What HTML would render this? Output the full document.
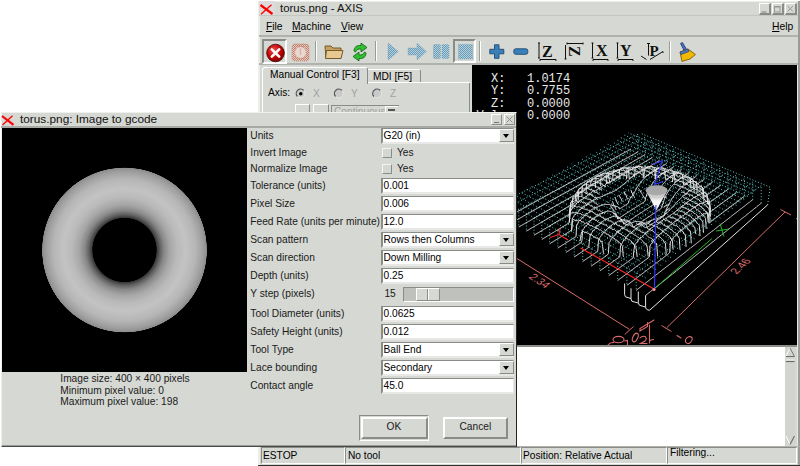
<!DOCTYPE html>
<html><head><meta charset="utf-8">
<style>
*{margin:0;padding:0;box-sizing:border-box}
html,body{width:800px;height:466px;overflow:hidden;background:#fff;position:relative;font-family:"Liberation Sans",sans-serif;color:#000}
.a{position:absolute}
.t{position:absolute;white-space:nowrap;line-height:1;font-size:10.2px}
.bg{background:#d6d8d3}
.sunk{border-top:1px solid #8a8c88;border-left:1px solid #8a8c88;border-bottom:1px solid #fff;border-right:1px solid #fff}
.rais{border-top:1px solid #fff;border-left:1px solid #fff;border-bottom:1px solid #8a8c88;border-right:1px solid #8a8c88}
.entry{position:absolute;left:381px;width:133px;height:16px;background:#fff;border-top:1px solid #8a8c88;border-left:2px solid #8a8c88;border-bottom:2px solid #e8e9e6;border-right:1px solid #e8e9e6}
.entry span{position:absolute;left:1px;top:2px;font-size:10.2px;white-space:nowrap;line-height:1}
.ddb{position:absolute;right:0;top:0;width:15px;height:13px;background:#d6d8d3;border-top:1px solid #fff;border-left:1px solid #fff;border-bottom:1px solid #8a8c88;border-right:1px solid #8a8c88}
.ddb:after{content:"";position:absolute;left:2.5px;top:4px;border-left:3.5px solid transparent;border-right:3.5px solid transparent;border-top:4px solid #000}
.lbl{position:absolute;left:250px;font-size:10.2px;white-space:nowrap;line-height:1;color:#1a1a1a}
.chk{position:absolute;left:382px;width:10px;height:10px;background:#d4d6d1;border-top:1px solid #f4f4f4;border-left:1px solid #f4f4f4;border-bottom:1px solid #8a8c88;border-right:1px solid #8a8c88}
.tb{position:absolute;width:11px;height:11px;background:#d6d8d3;border-top:1px solid #fff;border-left:1px solid #fff;border-bottom:1px solid #8a8c88;border-right:1px solid #8a8c88}
.sep{position:absolute;width:2px;border-left:1px solid #9a9c98;border-right:1px solid #fff}
</style></head><body>

<!-- ================= AXIS WINDOW ================= -->
<div class="a bg" style="left:258px;top:1px;width:542px;height:465px;border-left:2px solid #eceeea;border-top:1px solid #eceeea"></div>
<!-- title bar -->
<div class="a" style="left:259px;top:1px;width:16px;height:14px;background:#dcdcdc"></div>
<svg class="a" style="left:259px;top:4px" width="16" height="11" viewBox="0 0 16 11"><path d="M1.5 1 L13.5 10" stroke="#f00" stroke-width="2.2"/><path d="M12.5 0.8 L2 10.2" stroke="#f00" stroke-width="1.3"/></svg>
<div class="t" style="left:280px;top:3px;font-size:11.4px;color:#111">torus.png - AXIS</div>
<div class="tb" style="left:759px;top:3px;width:12px;height:12px;border-right-width:2px;border-bottom-width:2px"></div>
<div class="tb" style="left:772px;top:3px;width:12px;height:12px;border-right-width:2px;border-bottom-width:2px"></div>
<div class="tb" style="left:785px;top:3px;width:12px;height:12px;border-right-width:2px;border-bottom-width:2px"></div>
<svg class="a" style="left:759px;top:3px" width="40" height="12" viewBox="0 0 40 12">
<path d="M2.5 9 H7.5" stroke="#888" stroke-width="1.1"/>
<rect x="15.5" y="3.5" width="5.5" height="5.5" fill="none" stroke="#999" stroke-width="1"/><path d="M15.5 4 H21" stroke="#999" stroke-width="1"/>
<path d="M28.5 3 L34 8.5 M34 3 L28.5 8.5" stroke="#999" stroke-width="1"/>
</svg>
<!-- menubar -->
<div class="a" style="left:259px;top:15px;width:541px;height:1px;background:#c4c6c2"></div>
<div class="a" style="left:259px;top:35px;width:541px;height:2px;background:#b0b2ae"></div>
<div class="t" style="left:266px;top:22px;font-size:10.3px"><u>F</u>ile</div>
<div class="t" style="left:292px;top:22px;font-size:10.3px"><u>M</u>achine</div>
<div class="t" style="left:341px;top:22px;font-size:10.3px"><u>V</u>iew</div>
<div class="t" style="left:772px;top:22px;font-size:10.3px"><u>H</u>elp</div>
<!-- toolbar -->
<div class="a" style="left:259px;top:63px;width:541px;height:2px;background:#b0b2ae"></div>
<svg width="0" height="0" style="position:absolute"><defs><pattern id="dith" width="2" height="2" patternUnits="userSpaceOnUse"><rect width="2" height="2" fill="#b4d0dc"/><rect width="1" height="1" fill="#6a9cb8"/><rect x="1" y="1" width="1" height="1" fill="#6a9cb8"/></pattern>
<pattern id="dithr" width="2" height="2" patternUnits="userSpaceOnUse"><rect width="2" height="2" fill="#e8d0c4"/><rect width="1" height="1" fill="#c08070"/><rect x="1" y="1" width="1" height="1" fill="#c08070"/></pattern></defs></svg>
<!-- estop sunken button -->
<div class="a" style="left:262px;top:39px;width:25px;height:25px;border-top:2px solid #8a8c88;border-left:2px solid #8a8c88;border-bottom:2px solid #fff;border-right:2px solid #fff;background:#d6d8d3"></div>
<svg class="a" style="left:265px;top:43px" width="21" height="21" viewBox="0 0 21 21">
<defs><radialGradient id="rg1" cx="0.4" cy="0.35" r="0.7"><stop offset="0" stop-color="#f05050"/><stop offset="0.6" stop-color="#c00000"/><stop offset="1" stop-color="#700000"/></radialGradient></defs>
<circle cx="10.5" cy="10" r="8.8" fill="url(#rg1)" stroke="#400" stroke-width="0.8"/>
<path d="M6.8 6.3 L14.2 13.7 M14.2 6.3 L6.8 13.7" stroke="#fff" stroke-width="2.6" stroke-linecap="round"/>
</svg>
<!-- machine power (faded) -->
<svg class="a" style="left:291px;top:43px" width="19" height="19" viewBox="0 0 19 19">
<rect x="1" y="1" width="17" height="17" rx="3" fill="url(#dithr)" stroke="#c89080" stroke-width="1" stroke-dasharray="1 1"/>
<circle cx="9.5" cy="9.5" r="6" fill="#e8d8d0" stroke="#c88878" stroke-width="1.4" stroke-dasharray="1 1"/>
<path d="M9.5 5.5 V12" stroke="#c88878" stroke-width="1.2" stroke-dasharray="1 1"/>
</svg>
<div class="sep" style="left:315px;top:41px;height:20px"></div>
<!-- folder -->
<svg class="a" style="left:324px;top:44px" width="20" height="17" viewBox="0 0 20 17">
<path d="M1 2 L7 2 L9 4 L17 4 L17 14 L2 14 Z" fill="#c8a060" stroke="#6a5020" stroke-width="0.9"/>
<path d="M2.5 6.5 L19 6.5 L17 14.5 L1.5 14.5 Z" fill="#e8c890" stroke="#6a5020" stroke-width="0.9"/>
</svg>
<!-- reload -->
<svg class="a" style="left:350px;top:42px" width="20" height="20" viewBox="0 0 20 20">
<path d="M4 9 C4 5 7 3 11 3.5 L11 1 L17 5.5 L11 10 L11 7 C8.5 6.8 6.5 7.5 5.5 10 Z" fill="#30c030" stroke="#106010" stroke-width="0.8"/>
<path d="M16 11 C16 15 13 17 9 16.5 L9 19 L3 14.5 L9 10 L9 13 C11.5 13.2 13.5 12.5 14.5 10 Z" fill="#30c030" stroke="#106010" stroke-width="0.8"/>
</svg>
<div class="sep" style="left:375px;top:41px;height:20px"></div>
<!-- run (faded triangle) -->
<svg class="a" style="left:387px;top:42px" width="13" height="19" viewBox="0 0 13 19">
<path d="M1 1 L11.5 9.5 L1 18 Z" fill="url(#dith)" stroke="#6a98b0" stroke-width="0.6" stroke-dasharray="1 1"/>
</svg>
<!-- step arrow -->
<svg class="a" style="left:407px;top:42px" width="21" height="19" viewBox="0 0 21 19">
<path d="M1 6 L10 6 L10 1 L19.5 9.5 L10 18 L10 13 L1 13 Z" fill="url(#dith)" stroke="#6a98b0" stroke-width="0.6" stroke-dasharray="1 1"/>
</svg>
<!-- pause -->
<svg class="a" style="left:433px;top:44px" width="17" height="16" viewBox="0 0 17 16">
<rect x="0.5" y="0.5" width="7" height="14" rx="1" fill="url(#dith)" stroke="#6a98b0" stroke-width="0.6" stroke-dasharray="1 1"/>
<rect x="9" y="0.5" width="7" height="14" rx="1" fill="url(#dith)" stroke="#6a98b0" stroke-width="0.6" stroke-dasharray="1 1"/>
</svg>
<!-- stop sunken -->
<div class="a" style="left:453px;top:39px;width:23px;height:24px;border-top:2px solid #8a8c88;border-left:2px solid #8a8c88;border-bottom:2px solid #fff;border-right:2px solid #fff;background:#d6d8d3"></div>
<svg class="a" style="left:458px;top:44px" width="16" height="16" viewBox="0 0 16 16">
<rect x="0.5" y="0.5" width="14" height="14.5" fill="url(#dith)" stroke="#6a98b0" stroke-width="0.6" stroke-dasharray="1 1"/>
</svg>
<div class="sep" style="left:479px;top:41px;height:20px"></div>
<!-- plus -->
<svg class="a" style="left:489px;top:44px" width="16" height="16" viewBox="0 0 16 16">
<path d="M5.5 0.8 H10 V5.3 H14.8 V9.8 H10 V14.3 H5.5 V9.8 H0.8 V5.3 H5.5 Z" fill="#3a80b8" stroke="#204870" stroke-width="0.9" stroke-linejoin="round"/>
</svg>
<!-- minus -->
<svg class="a" style="left:513px;top:48px" width="16" height="8" viewBox="0 0 16 8">
<rect x="0.8" y="0.8" width="14" height="5.5" rx="2" fill="#3a80b8" stroke="#204870" stroke-width="0.9"/>
</svg>
<!-- Z view -->
<svg class="a" style="left:536px;top:41px" width="24" height="21" viewBox="0 0 24 21">
<path d="M3 2 V17 M2 2 H4 M2 17 H4" stroke="#111" stroke-width="1"/>
<path d="M4 18.5 H20" stroke="#111" stroke-width="1"/>
<path d="M4 18.5 L4 20 M20 18.5 L20 20" stroke="#111" stroke-width="1"/>
<text x="6" y="15.5" font-family="Liberation Serif" font-weight="bold" font-size="16" fill="#111">Z</text>
</svg>
<!-- rotated Z -->
<svg class="a" style="left:564px;top:41px" width="22" height="21" viewBox="0 0 22 21">
<path d="M1.5 4 V18 M0.5 18 H2.5" stroke="#111" stroke-width="1"/>
<path d="M3 2.5 H19 M3 1.5 V3.5 M19 1.5 V3.5" stroke="#111" stroke-width="1"/>
<text x="0" y="0" font-family="Liberation Serif" font-weight="bold" font-size="16" fill="#111" transform="translate(5,5) rotate(90)">Z</text>
</svg>
<!-- X view -->
<svg class="a" style="left:590px;top:41px" width="22" height="21" viewBox="0 0 22 21">
<path d="M2.5 2 V17 M1.5 2 H3.5 M1.5 17 H3.5" stroke="#111" stroke-width="1"/>
<path d="M3 18.5 H18 M3 18.5 V20 M18 18.5 V20" stroke="#111" stroke-width="1"/>
<text x="6" y="15" font-family="Liberation Serif" font-weight="bold" font-size="16" fill="#111">X</text>
</svg>
<!-- Y view -->
<svg class="a" style="left:615px;top:41px" width="22" height="21" viewBox="0 0 22 21">
<path d="M2.5 2 V17 M1.5 2 H3.5 M1.5 17 H3.5" stroke="#111" stroke-width="1"/>
<path d="M3 18.5 H18 M3 18.5 V20 M18 18.5 V20" stroke="#111" stroke-width="1"/>
<text x="5" y="15" font-family="Liberation Serif" font-weight="bold" font-size="16" fill="#111">Y</text>
</svg>
<!-- P view -->
<svg class="a" style="left:640px;top:41px" width="26" height="21" viewBox="0 0 26 21">
<path d="M8.5 2 V14.5 M7 2.5 H10" stroke="#111" stroke-width="1"/>
<path d="M1 15 L6.5 18.5 M10 18.5 L23 10.5 M23 10.5 V12" stroke="#111" stroke-width="1"/>
<text x="9.5" y="14.5" font-family="Liberation Serif" font-weight="bold" font-size="15" fill="#111">P</text>
</svg>
<div class="sep" style="left:669px;top:41px;height:20px"></div>
<!-- brush -->
<svg class="a" style="left:678px;top:41px" width="20" height="22" viewBox="0 0 20 22">
<path d="M2.5 2.5 L4.5 1.5 L9.5 10 L7 11.5 Z" fill="#4870c0" stroke="#203870" stroke-width="0.8"/>
<path d="M2 11 L10 8 L17.5 13.5 L12 18 L4 20.5 Z" fill="#f0b800" stroke="#705000" stroke-width="0.8"/>
<path d="M2 11 L10 8 L11 10.5 L3 13.5 Z" fill="#5078c0" stroke="#203870" stroke-width="0.6"/>
</svg>


<!-- left panel (tabs) -->
<!-- active tab -->
<div class="a" style="left:262px;top:67px;width:106px;height:17px;background:#d6d8d3;border-top:1px solid #fff;border-left:1px solid #fff;border-right:1px solid #8a8c88;border-radius:3px 3px 0 0"></div>
<div class="t" style="left:270px;top:70px;font-size:10.2px">Manual Control [F3]</div>
<!-- MDI tab -->
<div class="a" style="left:368px;top:69px;width:53px;height:14px;background:#d6d8d3;border-top:1px solid #fff;border-right:1px solid #8a8c88;border-radius:0 3px 0 0"></div>
<div class="t" style="left:373px;top:72px;font-size:10.2px">MDI [F5]</div>
<!-- panel frame -->
<div class="a" style="left:262px;top:83px;width:208px;height:40px;border-left:1px solid #fff;border-right:1px solid #8a8c88"></div>
<div class="a" style="left:368px;top:82px;width:102px;height:1px;background:#fff"></div>
<div class="t" style="left:268px;top:88px;font-size:10.2px">Axis:</div>
<svg class="a" style="left:294px;top:87px" width="110" height="14" viewBox="0 0 110 14">
<g><circle cx="6.8" cy="6.8" r="4.3" fill="#cacaca"/><path d="M3.5 9.6 A4.3 4.3 0 0 1 9.8 3.5" fill="none" stroke="#555" stroke-width="1.3"/><path d="M9.8 3.5 A4.3 4.3 0 0 1 3.5 9.6" fill="none" stroke="#e8e8e8" stroke-width="1"/><circle cx="6.8" cy="6.8" r="1.7" fill="#000"/></g>
<g transform="translate(38.2,0)"><circle cx="6.8" cy="6.8" r="4.3" fill="#cacaca"/><path d="M3.5 9.6 A4.3 4.3 0 0 1 9.8 3.5" fill="none" stroke="#555" stroke-width="1.3"/><path d="M9.8 3.5 A4.3 4.3 0 0 1 3.5 9.6" fill="none" stroke="#e8e8e8" stroke-width="1"/></g>
<g transform="translate(76.5,0)"><circle cx="6.8" cy="6.8" r="4.3" fill="#cacaca"/><path d="M3.5 9.6 A4.3 4.3 0 0 1 9.8 3.5" fill="none" stroke="#555" stroke-width="1.3"/><path d="M9.8 3.5 A4.3 4.3 0 0 1 3.5 9.6" fill="none" stroke="#e8e8e8" stroke-width="1"/></g>
</svg>
<div class="t" style="left:313px;top:89px;font-size:10.2px;color:#a0a29e">X</div>
<div class="t" style="left:351px;top:89px;font-size:10.2px;color:#a0a29e">Y</div>
<div class="t" style="left:390px;top:89px;font-size:10.2px;color:#a0a29e">Z</div>
<div class="a" style="left:295px;top:104px;width:15px;height:10px;border-top:1px solid #fff;border-left:1px solid #fff;border-right:1px solid #8a8c88"></div>
<div class="a" style="left:313px;top:104px;width:16px;height:10px;border-top:1px solid #fff;border-left:1px solid #fff;border-right:1px solid #8a8c88"></div>
<div class="a" style="left:331px;top:105px;width:68px;height:10px;border-top:1px solid #8a8c88;border-left:1px solid #8a8c88;background:#d6d8d3"></div>
<div class="t" style="left:334px;top:107px;font-size:10.2px;color:#a0a29e">Continuous</div>
<div class="a" style="left:385px;top:106px;width:13px;height:8px;border-top:1px solid #fff;border-left:1px solid #fff;background:#d6d8d3"></div>
<div class="a" style="left:388px;top:109px;width:7px;height:2px;background:#555"></div>


<!-- 3D view -->
<div class="a" style="left:472px;top:65px;width:325px;height:280px;background:#000;overflow:hidden">
<svg class="a" style="left:0;top:0" width="325" height="280" viewBox="0 0 325 280">
<path d="M289.2 138.2 L289.2 120.6 M289.2 120.6 L164.2 207.8 M164.2 207.8 L164.2 225.4 M280.7 134.7 L280.7 117.1 M280.7 117.1 L154.9 202.8 M154.9 202.8 L154.9 220.4 M272.3 131.2 L272.3 113.6 M272.3 113.6 L145.7 197.9 M145.7 197.9 L145.7 215.5 M264.1 127.7 L264.1 110.2 M264.1 110.2 L136.8 193.0 M136.8 193.0 L136.8 210.6 M255.9 124.3 L255.9 106.8 M255.9 106.8 L127.9 188.3 M127.9 188.3 L127.9 205.8 M247.9 121.0 L247.9 103.4 M247.9 103.4 L119.2 183.6 M119.2 183.6 L119.2 201.1 M239.9 117.7 L239.9 100.1 M239.9 100.1 L110.7 178.9 M110.7 178.9 L110.7 196.5 M232.1 114.4 L232.1 96.9 M232.1 96.9 L102.2 174.4 M102.2 174.4 L102.2 191.9 M224.3 111.2 L224.3 93.6 M224.3 93.6 L93.9 169.9 M93.9 169.9 L93.9 187.5 M216.7 108.0 L216.7 90.5 M216.7 90.5 L85.8 165.5 M85.8 165.5 L85.8 183.1 M209.2 104.9 L209.2 87.3 M209.2 87.3 L77.7 161.2 M77.7 161.2 L77.7 178.7 M201.7 101.8 L201.7 84.2 M201.7 84.2 L69.8 156.9 M69.8 156.9 L69.8 174.4 M194.4 98.7 L194.4 81.2 M194.4 81.2 L62.0 152.7 M62.0 152.7 L62.0 170.2 M187.1 95.7 L187.1 78.2 M187.1 78.2 L54.4 148.5 M54.4 148.5 L54.4 166.1 M180.0 92.7 L180.0 75.2 M180.0 75.2 L46.8 144.4 M46.8 144.4 L46.8 162.0 M172.9 89.8 L172.9 72.2 M172.9 72.2 L39.3 140.4 M39.3 140.4 L39.3 158.0 M165.9 86.9 L165.9 69.3 M165.9 69.3 L32.0 136.4 M32.0 136.4 L32.0 154.0 M173.6 212.9 L32.0 136.4 M178.9 208.7 L37.7 133.3 M184.1 204.6 L43.2 130.2 M189.2 200.5 L48.8 127.2 M194.2 196.5 L54.2 124.2 M199.1 192.6 L59.5 121.3 M204.0 188.7 L64.8 118.4 M208.7 184.9 L70.0 115.5 M213.4 181.1 L75.1 112.7 M218.1 177.4 L80.1 109.9 M222.6 173.8 L85.1 107.2 M227.1 170.2 L90.0 104.5 M231.5 166.7 L94.9 101.8 M235.9 163.2 L99.7 99.2 M240.1 159.8 L104.4 96.6 M244.3 156.5 L109.0 94.0 M248.5 153.1 L113.6 91.5 M252.6 149.9 L118.1 89.0 M256.6 146.7 L122.6 86.5 M260.6 143.5 L127.0 84.1 M264.5 140.4 L131.4 81.7 M268.4 137.3 L135.7 79.3 M272.2 134.3 L139.9 77.0 M275.9 131.3 L144.1 74.7 M279.6 128.3 L148.2 72.4 M283.2 125.4 L152.3 70.1 M286.8 122.5 L156.3 67.9" fill="none" stroke="#5ec8c8" stroke-width="1" stroke-dasharray="1 2"/>
<path d="M173.6 230.5 L174.3 229.9 L175.0 229.4 L175.7 228.8 L176.4 228.2 L177.1 227.7 L177.8 227.1 L178.5 226.6 L179.2 226.0 L179.9 225.5 L180.6 224.9 L181.3 224.3 L182.0 223.8 L182.7 223.2 L183.4 222.7 L184.1 222.1 L184.7 221.6 L185.4 221.1 L186.1 220.5 L186.8 220.0 L187.5 219.4 L188.1 218.9 L188.8 218.3 L189.5 217.8 L190.2 217.3 L190.8 216.7 L191.5 216.2 L192.2 215.7 L192.8 215.1 L193.5 214.6 L194.2 214.1 L194.8 213.5 L195.5 213.0 L196.2 212.5 L196.8 212.0 L197.5 211.4 L198.1 210.9 L198.8 210.4 L199.4 209.9 L200.1 209.4 L200.7 208.8 L201.4 208.3 L202.0 207.8 L202.7 207.3 L203.3 206.8 L204.0 206.3 L204.6 205.7 L205.2 205.2 L205.9 204.7 L206.5 204.2 L207.2 203.7 L207.8 203.2 L208.4 202.7 L209.1 202.2 L209.7 201.7 L210.3 201.2 L210.9 200.7 L211.6 200.2 L212.2 199.7 L212.8 199.2 L213.4 198.7 L214.1 198.2 L214.7 197.7 L215.3 197.2 L215.9 196.7 L216.5 196.2 L217.1 195.7 L217.8 195.2 L218.4 194.8 L219.0 194.3 L219.6 193.8 L220.2 193.3 L220.8 192.8 L221.4 192.3 L222.0 191.8 L222.6 191.4 L223.2 190.9 L223.8 190.4 L224.4 189.9 L225.0 189.4 L225.6 189.0 L226.2 188.5 L226.8 188.0 L227.4 187.5 L228.0 187.1 L228.6 186.6 L229.2 186.1 L229.8 185.7 L230.3 185.2 L230.9 184.7 L231.5 184.3 L232.1 183.8 L232.7 183.3 L233.3 182.9 L233.8 182.4 L234.4 181.9 L235.0 181.5 L235.6 181.0 L236.1 180.6 L236.7 180.1 L237.3 179.6 L237.9 179.2 L238.4 178.7 L239.0 178.3 L239.6 177.8 L240.1 177.4 L240.7 176.9 L241.3 176.5 L241.8 176.0 L242.4 175.6 L243.0 175.1 L243.5 174.7 L244.1 174.2 L244.6 173.8 L245.2 173.3 L245.7 172.9 L246.3 172.5 L246.8 172.0 L247.4 171.6 L248.0 171.1 L248.5 170.7 L249.1 170.3 L249.6 169.8 L250.1 169.4 L250.7 168.9 L251.2 168.5 L251.8 168.1 L252.3 167.6 L252.9 167.2 L253.4 166.8 L253.9 166.4 L254.5 165.9 L255.0 165.5 L255.6 165.1 L256.1 164.6 L256.6 164.2 L257.2 163.8 L257.7 163.4 L258.2 162.9 L258.7 162.5 L259.3 162.1 L259.8 161.7 L260.3 161.3 L260.9 160.8 L261.4 160.4 L261.9 160.0 L262.4 159.6 L262.9 159.2 L263.5 158.7 L264.0 158.3 L264.5 157.9 L265.0 157.5 L265.5 157.1 L266.1 156.7 L266.6 156.3 L267.1 155.9 L267.6 155.5 L268.1 155.0 L268.6 154.6 L269.1 154.2 L269.6 153.8 L270.1 153.4 L270.6 153.0 L271.2 152.6 L271.7 152.2 L272.2 151.8 L272.7 151.4 L273.2 151.0 L273.7 150.6 L274.2 150.2 L274.7 149.8 L275.2 149.4 L275.7 149.0 L276.2 148.6 L276.6 148.2 L277.1 147.8 L277.6 147.4 L278.1 147.0 L278.6 146.6 L279.1 146.3 L279.6 145.9 L280.1 145.5 L280.6 145.1 L281.1 144.7 L281.5 144.3 L282.0 143.9 L282.5 143.5 L283.0 143.1 L283.5 142.8 L284.0 142.4 L284.4 142.0 L284.9 141.6 L285.4 141.2 L285.9 140.9 L286.4 140.5 L286.8 140.1 L287.3 139.7 L287.8 139.3 L288.3 139.0 L288.7 138.6 L289.2 138.2 M164.2 225.4 L164.9 224.8 L165.6 224.3 L166.3 223.7 L167.0 223.2 L167.7 222.6 L168.4 222.1 L169.1 221.5 L169.8 221.0 L170.5 220.4 L171.2 219.9 L171.9 219.4 L172.6 218.8 L173.3 218.3 L174.0 217.7 L174.7 217.2 L175.4 216.7 L176.1 216.1 L176.8 215.6 L177.4 215.1 L178.1 214.5 L178.8 214.0 L179.5 213.5 L180.2 212.9 L180.8 212.4 L181.5 211.9 L182.2 211.4 L182.9 210.8 L183.5 210.3 L184.2 209.8 L184.9 209.3 L185.5 208.8 L186.2 208.2 L186.9 207.7 L187.5 207.2 L188.2 206.7 L188.9 206.2 L189.5 205.7 L190.2 205.1 L190.8 204.6 L191.5 204.1 L192.1 203.6 L192.8 203.1 L193.4 202.6 L194.1 202.1 L194.7 201.6 L195.4 201.1 L196.0 200.6 L196.7 200.1 L197.3 199.6 L198.0 199.1 L198.6 198.6 L199.2 198.1 L199.9 197.6 L200.5 197.1 L201.1 196.6 L201.8 196.1 L202.4 195.6 L203.0 195.1 L203.7 194.7 L204.3 194.2 L204.9 193.7 L205.5 193.2 L206.2 192.7 L206.8 192.2 L207.4 191.7 L208.0 191.3 L208.6 190.8 L209.3 190.3 L209.9 189.8 L210.5 189.3 L211.1 188.9 L211.7 188.4 L212.3 187.9 L212.9 187.4 L213.5 187.0 L214.1 186.5 L214.7 186.0 L215.3 185.5 L216.0 185.1 L216.6 184.6 L217.2 184.1 L217.8 183.7 L218.4 183.2 L218.9 182.7 L219.5 182.3 L220.1 181.8 L220.7 181.4 L221.3 180.9 L221.9 180.4 L222.5 180.0 L223.1 179.5 L223.7 179.1 L224.3 178.6 L224.8 178.2 L225.4 177.7 L226.0 177.2 L226.6 176.8 L227.2 176.3 L227.7 175.9 L228.3 175.4 L228.9 175.0 L229.5 174.5 L230.1 174.1 L230.6 173.7 L231.2 173.2 L231.8 172.8 L232.3 172.3 L232.9 171.9 L233.5 171.4 L234.0 171.0 L234.6 170.6 L235.2 170.1 L235.7 169.7 L236.3 169.2 L236.8 168.8 L237.4 168.4 L238.0 167.9 L238.5 167.5 L239.1 167.1 L239.6 166.6 L240.2 166.2 L240.7 165.8 L241.3 165.4 L241.8 164.9 L242.4 164.5 L242.9 164.1 L243.5 163.6 L244.0 163.2 L244.6 162.8 L245.1 162.4 L245.7 161.9 L246.2 161.5 L246.7 161.1 L247.3 160.7 L247.8 160.3 L248.4 159.8 L248.9 159.4 L249.4 159.0 L250.0 158.6 L250.5 158.2 L251.0 157.8 L251.6 157.4 L252.1 156.9 L252.6 156.5 L253.2 156.1 L253.7 155.7 L254.2 155.3 L254.7 154.9 L255.3 154.5 L255.8 154.1 L256.3 153.7 L256.8 153.3 L257.3 152.9 L257.9 152.5 L258.4 152.0 L258.9 151.6 L259.4 151.2 L259.9 150.8 L260.4 150.4 L261.0 150.0 L261.5 149.6 L262.0 149.2 L262.5 148.8 L263.0 148.5 L263.5 148.1 L264.0 147.7 L264.5 147.3 L265.0 146.9 L265.5 146.5 L266.0 146.1 L266.5 145.7 L267.0 145.3 L267.5 144.9 L268.0 144.5 L268.5 144.1 L269.0 143.8 L269.5 143.4 L270.0 143.0 L270.5 142.6 L271.0 142.2 L271.5 141.8 L272.0 141.4 L272.5 141.1 L273.0 140.7 L273.5 140.3 L274.0 139.9 L274.4 139.5 L274.9 139.2 L275.4 138.8 L275.9 138.4 L276.4 138.0 L276.9 137.6 L277.4 137.3 L277.8 136.9 L278.3 136.5 L278.8 136.2 L279.3 135.8 L279.8 135.4 L280.2 135.0 L280.7 134.7 M154.9 220.4 L155.6 219.8 L156.3 219.3 L157.0 218.8 L157.7 218.2 L158.4 217.7 L159.2 217.1 L159.9 216.6 L160.6 216.1 L161.3 215.5 L162.0 215.0 L162.7 214.5 L163.4 213.9 L164.1 213.4 L164.8 212.9 L165.5 212.3 L166.2 211.8 L166.9 211.3 L167.6 210.8 L168.2 210.2 L168.9 209.7 L169.6 209.2 L170.3 208.7 L171.0 208.1 L171.7 207.6 L172.3 207.1 L173.0 206.6 L173.7 206.1 L174.4 205.6 L175.1 205.1 L175.7 204.5 L176.4 204.0 L177.1 203.5 L177.7 203.0 L178.4 202.5 L179.1 202.0 L179.7 201.5 L180.4 201.0 L181.1 200.5 L181.7 200.0 L182.4 199.5 L183.0 199.0 L183.7 198.5 L184.3 198.0 L185.0 197.5 L185.7 197.0 L186.3 196.5 L187.0 196.0 L187.6 195.5 L188.2 195.0 L188.9 194.5 L189.5 194.1 L190.2 193.6 L190.8 193.1 L191.5 192.6 L192.1 192.1 L192.7 191.6 L193.4 191.1 L194.0 190.7 L194.6 190.2 L195.3 189.7 L195.9 189.2 L196.5 188.7 L197.2 188.1 L197.8 187.2 L198.4 176.6 L199.0 176.2 L199.7 175.3 L200.3 173.7 L200.9 174.3 L201.5 172.4 L202.1 171.7 L202.7 171.5 L203.4 171.1 L204.0 170.5 L204.6 169.8 L205.2 168.9 L205.8 168.2 L206.4 167.6 L207.0 166.3 L207.6 166.1 L208.2 165.8 L208.8 164.8 L209.4 165.4 L210.0 164.9 L210.6 163.8 L211.2 164.1 L211.8 163.6 L212.4 162.4 L213.0 162.0 L213.6 160.8 L214.2 160.8 L214.8 160.5 L215.4 160.0 L216.0 159.9 L216.6 159.8 L217.2 159.1 L217.7 157.9 L218.3 158.2 L218.9 157.5 L219.5 157.6 L220.1 155.9 L220.7 156.5 L221.2 155.9 L221.8 154.6 L222.4 154.8 L223.0 153.9 L223.5 153.8 L224.1 153.2 L224.7 153.8 L225.3 152.8 L225.8 152.4 L226.4 151.5 L227.0 151.9 L227.5 151.2 L228.1 151.6 L228.7 150.8 L229.2 150.6 L229.8 150.6 L230.3 149.3 L230.9 149.7 L231.5 148.6 L232.0 148.9 L232.6 148.7 L233.1 148.4 L233.7 148.2 L234.2 148.8 L234.8 148.2 L235.3 148.3 L235.9 148.0 L236.4 148.7 L237.0 157.3 L237.5 158.0 L238.1 157.2 L238.6 156.8 L239.2 156.4 L239.7 156.0 L240.2 155.6 L240.8 155.1 L241.3 154.7 L241.9 154.3 L242.4 153.9 L242.9 153.5 L243.5 153.1 L244.0 152.7 L244.5 152.3 L245.1 151.9 L245.6 151.5 L246.1 151.1 L246.6 150.7 L247.2 150.3 L247.7 149.9 L248.2 149.5 L248.8 149.1 L249.3 148.7 L249.8 148.3 L250.3 147.9 L250.8 147.5 L251.4 147.1 L251.9 146.7 L252.4 146.3 L252.9 145.9 L253.4 145.5 L253.9 145.1 L254.5 144.8 L255.0 144.4 L255.5 144.0 L256.0 143.6 L256.5 143.2 L257.0 142.8 L257.5 142.4 L258.0 142.0 L258.5 141.7 L259.0 141.3 L259.5 140.9 L260.0 140.5 L260.5 140.1 L261.1 139.7 L261.6 139.4 L262.1 139.0 L262.5 138.6 L263.0 138.2 L263.5 137.9 L264.0 137.5 L264.5 137.1 L265.0 136.7 L265.5 136.3 L266.0 136.0 L266.5 135.6 L267.0 135.2 L267.5 134.9 L268.0 134.5 L268.5 134.1 L268.9 133.7 L269.4 133.4 L269.9 133.0 L270.4 132.6 L270.9 132.3 L271.4 131.9 L271.8 131.5 L272.3 131.2 M145.7 215.5 L146.5 214.9 L147.2 214.4 L147.9 213.8 L148.6 213.3 L149.3 212.8 L150.1 212.3 L150.8 211.7 L151.5 211.2 L152.2 210.7 L152.9 210.2 L153.6 209.6 L154.3 209.1 L155.0 208.6 L155.7 208.1 L156.4 207.5 L157.1 207.0 L157.8 206.5 L158.5 206.0 L159.2 205.5 L159.9 205.0 L160.6 204.5 L161.3 203.9 L162.0 203.4 L162.6 202.9 L163.3 202.4 L164.0 201.9 L164.7 201.4 L165.4 200.9 L166.0 200.4 L166.7 199.9 L167.4 199.4 L168.1 198.9 L168.7 198.4 L169.4 197.9 L170.1 197.4 L170.8 196.9 L171.4 196.4 L172.1 195.9 L172.8 195.4 L173.4 194.9 L174.1 194.4 L174.7 194.0 L175.4 193.5 L176.1 193.0 L176.7 192.5 L177.4 191.8 L178.0 181.5 L178.7 179.3 L179.3 178.7 L180.0 178.6 L180.6 176.7 L181.3 175.7 L181.9 174.9 L182.6 174.5 L183.2 174.5 L183.8 173.7 L184.5 172.0 L185.1 171.9 L185.8 171.8 L186.4 170.1 L187.0 169.8 L187.7 169.3 L188.3 169.0 L188.9 168.3 L189.6 167.9 L190.2 167.6 L190.8 165.8 L191.4 165.8 L192.1 165.2 L192.7 165.0 L193.3 163.9 L193.9 164.4 L194.5 163.4 L195.2 163.4 L195.8 162.8 L196.4 161.1 L197.0 161.0 L197.6 160.9 L198.2 160.3 L198.8 159.3 L199.5 159.6 L200.1 158.7 L200.7 158.1 L201.3 158.1 L201.9 157.4 L202.5 156.6 L203.1 155.9 L203.7 156.6 L204.3 154.9 L204.9 155.9 L205.5 154.3 L206.1 153.8 L206.7 154.3 L207.3 153.4 L207.9 152.4 L208.4 153.2 L209.0 151.8 L209.6 151.1 L210.2 151.1 L210.8 150.4 L211.4 150.7 L212.0 150.3 L212.6 149.6 L213.1 149.5 L213.7 148.8 L214.3 147.5 L214.9 147.6 L215.4 147.6 L216.0 147.3 L216.6 145.9 L217.2 146.2 L217.7 145.0 L218.3 145.3 L218.9 144.9 L219.5 143.9 L220.0 143.8 L220.6 143.6 L221.2 143.5 L221.7 142.4 L222.3 142.7 L222.8 141.6 L223.4 142.5 L224.0 141.6 L224.5 141.1 L225.1 140.0 L225.6 140.7 L226.2 139.5 L226.8 139.4 L227.3 139.1 L227.9 139.0 L228.4 138.2 L229.0 138.9 L229.5 138.5 L230.1 138.6 L230.6 138.6 L231.2 138.1 L231.7 136.8 L232.2 136.7 L232.8 137.6 L233.3 136.6 L233.9 136.6 L234.4 136.4 L235.0 136.3 L235.5 136.8 L236.0 135.8 L236.6 136.5 L237.1 136.3 L237.6 136.8 L238.2 147.4 L238.7 146.5 L239.2 146.1 L239.8 145.8 L240.3 145.4 L240.8 145.0 L241.3 144.6 L241.9 144.2 L242.4 143.8 L242.9 143.4 L243.4 143.0 L244.0 142.6 L244.5 142.3 L245.0 141.9 L245.5 141.5 L246.0 141.1 L246.6 140.7 L247.1 140.3 L247.6 140.0 L248.1 139.6 L248.6 139.2 L249.1 138.8 L249.6 138.4 L250.1 138.1 L250.7 137.7 L251.2 137.3 L251.7 136.9 L252.2 136.5 L252.7 136.2 L253.2 135.8 L253.7 135.4 L254.2 135.1 L254.7 134.7 L255.2 134.3 L255.7 133.9 L256.2 133.6 L256.7 133.2 L257.2 132.8 L257.7 132.5 L258.2 132.1 L258.7 131.7 L259.2 131.4 L259.7 131.0 L260.2 130.6 L260.7 130.3 L261.1 129.9 L261.6 129.5 L262.1 129.2 L262.6 128.8 L263.1 128.5 L263.6 128.1 L264.1 127.7 M136.8 210.6 L137.5 210.1 L138.2 209.5 L138.9 209.0 L139.7 208.5 L140.4 208.0 L141.1 207.5 L141.8 206.9 L142.5 206.4 L143.2 205.9 L143.9 205.4 L144.7 204.9 L145.4 204.4 L146.1 203.9 L146.8 203.3 L147.5 202.8 L148.2 202.3 L148.9 201.8 L149.6 201.3 L150.3 200.8 L151.0 200.3 L151.7 199.8 L152.4 199.3 L153.1 198.8 L153.7 198.3 L154.4 197.8 L155.1 197.3 L155.8 196.8 L156.5 196.3 L157.2 195.8 L157.9 195.3 L158.5 194.8 L159.2 194.3 L159.9 193.8 L160.6 193.4 L161.2 192.9 L161.9 185.5 L162.6 180.8 L163.3 179.3 L163.9 178.3 L164.6 177.4 L165.3 177.4 L165.9 175.3 L166.6 174.7 L167.3 173.9 L167.9 173.7 L168.6 172.4 L169.2 173.0 L169.9 172.3 L170.5 171.6 L171.2 170.6 L171.8 169.9 L172.5 169.4 L173.1 168.2 L173.8 168.5 L174.4 167.1 L175.1 167.2 L175.7 166.0 L176.4 166.4 L177.0 165.4 L177.7 164.0 L178.3 164.1 L178.9 163.1 L179.6 162.8 L180.2 162.4 L180.8 162.5 L181.5 161.4 L182.1 161.7 L182.7 160.2 L183.4 159.6 L184.0 159.3 L184.6 160.1 L185.2 159.3 L185.9 158.9 L186.5 158.8 L187.1 157.6 L187.7 157.0 L188.3 157.3 L189.0 156.0 L189.6 155.7 L190.2 156.3 L190.8 154.9 L191.4 154.4 L192.0 155.0 L192.6 154.0 L193.2 153.5 L193.9 153.1 L194.5 153.5 L195.1 152.3 L195.7 151.9 L196.3 151.3 L196.9 151.3 L197.5 150.9 L198.1 150.5 L198.7 150.1 L199.3 149.7 L199.9 149.3 L200.5 148.9 L201.0 148.4 L201.6 148.0 L202.2 147.6 L202.8 147.1 L203.4 146.7 L204.0 146.2 L204.6 145.8 L205.2 144.9 L205.7 145.1 L206.3 144.0 L206.9 143.4 L207.5 142.8 L208.1 143.5 L208.6 143.2 L209.2 141.8 L209.8 142.0 L210.4 141.1 L210.9 140.1 L211.5 140.5 L212.1 140.2 L212.7 139.4 L213.2 138.7 L213.8 139.1 L214.4 138.2 L214.9 138.1 L215.5 136.9 L216.1 136.2 L216.6 136.4 L217.2 136.0 L217.7 135.2 L218.3 135.3 L218.9 134.8 L219.4 134.4 L220.0 133.8 L220.5 134.0 L221.1 132.7 L221.6 132.6 L222.2 132.7 L222.7 132.7 L223.3 131.3 L223.8 131.9 L224.4 131.6 L224.9 131.3 L225.5 131.0 L226.0 129.5 L226.6 130.1 L227.1 129.8 L227.6 128.9 L228.2 129.0 L228.7 129.5 L229.3 129.0 L229.8 128.1 L230.3 128.7 L230.9 128.1 L231.4 128.8 L231.9 127.8 L232.5 127.8 L233.0 127.8 L233.5 128.1 L234.1 128.6 L234.6 129.2 L235.1 131.9 L235.6 139.0 L236.2 138.6 L236.7 138.3 L237.2 137.9 L237.7 137.5 L238.3 137.1 L238.8 136.7 L239.3 136.4 L239.8 136.0 L240.3 135.6 L240.8 135.2 L241.4 134.9 L241.9 134.5 L242.4 134.1 L242.9 133.8 L243.4 133.4 L243.9 133.0 L244.4 132.6 L244.9 132.3 L245.5 131.9 L246.0 131.5 L246.5 131.2 L247.0 130.8 L247.5 130.4 L248.0 130.1 L248.5 129.7 L249.0 129.4 L249.5 129.0 L250.0 128.6 L250.5 128.3 L251.0 127.9 L251.5 127.6 L252.0 127.2 L252.5 126.8 L253.0 126.5 L253.5 126.1 L253.9 125.8 L254.4 125.4 L254.9 125.1 L255.4 124.7 L255.9 124.3 M127.9 205.8 L128.7 205.3 L129.4 204.8 L130.1 204.3 L130.8 203.8 L131.6 203.3 L132.3 202.7 L133.0 202.2 L133.7 201.7 L134.4 201.2 L135.1 200.7 L135.9 200.2 L136.6 199.7 L137.3 199.2 L138.0 198.7 L138.7 198.2 L139.4 197.7 L140.1 197.2 L140.8 196.7 L141.5 196.2 L142.2 195.7 L142.9 195.2 L143.6 194.7 L144.3 194.2 L145.0 193.7 L145.7 193.3 L146.4 192.8 L147.1 192.3 L147.8 191.8 L148.5 180.6 L149.1 179.9 L149.8 178.8 L150.5 177.3 L151.2 176.0 L151.9 174.8 L152.5 175.1 L153.2 174.3 L153.9 172.6 L154.6 172.1 L155.2 171.3 L155.9 170.1 L156.6 169.5 L157.3 168.9 L157.9 168.3 L158.6 168.3 L159.3 167.4 L159.9 167.6 L160.6 166.2 L161.2 165.6 L161.9 165.1 L162.6 165.0 L163.2 164.5 L163.9 163.9 L164.5 164.0 L165.2 162.2 L165.8 162.3 L166.5 162.1 L167.1 161.5 L167.8 160.9 L168.4 161.0 L169.1 159.9 L169.7 159.4 L170.3 159.8 L171.0 159.8 L171.6 158.5 L172.3 157.8 L172.9 158.7 L173.5 157.9 L174.2 157.7 L174.8 157.4 L175.4 157.1 L176.1 156.8 L176.7 156.5 L177.3 156.2 L177.9 155.9 L178.6 155.6 L179.2 155.4 L179.8 155.1 L180.4 155.0 L181.0 154.8 L181.7 154.7 L182.3 154.5 L182.9 154.3 L183.5 154.1 L184.1 153.9 L184.7 153.6 L185.4 153.4 L186.0 153.1 L186.6 152.9 L187.2 152.6 L187.8 152.3 L188.4 152.0 L189.0 151.7 L189.6 151.4 L190.2 151.1 L190.8 150.7 L191.4 150.3 L192.0 149.9 L192.6 149.5 L193.2 149.0 L193.8 148.6 L194.4 148.1 L195.0 147.6 L195.6 147.0 L196.1 146.5 L196.7 146.0 L197.3 145.4 L197.9 144.9 L198.5 144.3 L199.1 143.7 L199.7 143.1 L200.2 142.5 L200.8 141.8 L201.4 141.2 L202.0 140.5 L202.6 139.9 L203.1 139.2 L203.7 138.5 L204.3 137.8 L204.9 137.2 L205.4 136.6 L206.0 136.1 L206.6 135.5 L207.1 135.0 L207.7 134.4 L208.3 133.9 L208.8 133.3 L209.4 132.7 L210.0 132.2 L210.5 131.3 L211.1 130.5 L211.6 129.9 L212.2 130.6 L212.8 130.2 L213.3 128.5 L213.9 129.3 L214.4 128.7 L215.0 127.7 L215.5 127.4 L216.1 126.5 L216.6 126.9 L217.2 125.3 L217.7 126.1 L218.3 124.9 L218.8 125.7 L219.4 124.8 L219.9 125.1 L220.5 124.4 L221.0 124.1 L221.5 123.2 L222.1 123.3 L222.6 123.5 L223.2 121.9 L223.7 121.8 L224.2 121.7 L224.8 122.5 L225.3 122.2 L225.8 122.3 L226.4 122.4 L226.9 122.4 L227.4 121.6 L228.0 122.1 L228.5 122.2 L229.0 121.3 L229.5 122.1 L230.1 122.7 L230.6 122.7 L231.1 132.8 L231.6 132.5 L232.2 132.1 L232.7 131.7 L233.2 131.4 L233.7 131.0 L234.2 130.6 L234.8 130.3 L235.3 129.9 L235.8 129.5 L236.3 129.2 L236.8 128.8 L237.3 128.4 L237.8 128.1 L238.3 127.7 L238.9 127.4 L239.4 127.0 L239.9 126.6 L240.4 126.3 L240.9 125.9 L241.4 125.6 L241.9 125.2 L242.4 124.9 L242.9 124.5 L243.4 124.2 L243.9 123.8 L244.4 123.4 L244.9 123.1 L245.4 122.7 L245.9 122.4 L246.4 122.0 L246.9 121.7 L247.4 121.3 L247.9 121.0 M119.2 201.1 L120.0 200.6 L120.7 200.1 L121.4 199.6 L122.1 199.1 L122.9 198.6 L123.6 198.1 L124.3 197.6 L125.0 197.1 L125.8 196.6 L126.5 196.1 L127.2 195.6 L127.9 195.1 L128.6 194.6 L129.3 194.1 L130.1 193.6 L130.8 193.1 L131.5 192.7 L132.2 192.2 L132.9 191.7 L133.6 191.2 L134.3 190.7 L135.0 190.2 L135.7 189.7 L136.4 188.4 L137.1 177.6 L137.8 176.8 L138.5 175.4 L139.2 174.2 L139.9 173.3 L140.5 172.7 L141.2 171.3 L141.9 170.5 L142.6 170.7 L143.3 170.0 L144.0 169.3 L144.7 167.3 L145.3 166.6 L146.0 167.1 L146.7 165.4 L147.4 166.0 L148.0 165.0 L148.7 164.5 L149.4 163.3 L150.0 164.0 L150.7 163.1 L151.4 162.1 L152.0 162.3 L152.7 161.7 L153.4 161.0 L154.0 160.0 L154.7 159.8 L155.4 159.3 L156.0 159.1 L156.7 158.8 L157.3 158.2 L158.0 158.1 L158.6 157.8 L159.3 157.9 L159.9 157.7 L160.6 157.4 L161.2 157.2 L161.9 157.0 L162.5 156.7 L163.2 156.5 L163.8 156.4 L164.4 156.5 L165.1 156.5 L165.7 156.5 L166.3 156.5 L167.0 156.6 L167.6 156.6 L168.2 156.7 L168.9 157.0 L169.5 157.5 L170.1 158.0 L170.8 157.4 L171.4 158.5 L172.0 157.8 L172.6 158.7 L173.3 159.5 L173.9 158.9 L174.5 160.5 L175.1 161.9 L175.7 162.1 L176.4 161.6 L177.0 161.2 L177.6 160.8 L178.2 160.4 L178.8 159.9 L179.4 159.5 L180.0 159.1 L180.6 158.7 L181.2 158.3 L181.8 157.8 L182.5 157.4 L183.1 157.0 L183.7 156.6 L184.3 156.2 L184.9 155.8 L185.5 155.3 L186.1 154.9 L186.6 154.5 L187.2 154.1 L187.8 153.7 L188.4 153.3 L189.0 152.9 L189.6 152.5 L190.2 152.1 L190.8 151.7 L191.4 151.2 L192.0 150.8 L192.5 149.9 L193.1 147.1 L193.7 146.5 L194.3 144.0 L194.9 143.4 L195.5 141.8 L196.0 141.3 L196.6 139.5 L197.2 138.5 L197.8 137.5 L198.3 136.6 L198.9 135.5 L199.5 134.5 L200.0 133.7 L200.6 132.9 L201.2 132.0 L201.7 131.1 L202.3 130.3 L202.9 129.4 L203.4 128.7 L204.0 128.1 L204.6 127.5 L205.1 126.9 L205.7 126.2 L206.2 125.6 L206.8 125.0 L207.4 123.8 L207.9 123.9 L208.5 123.5 L209.0 122.6 L209.6 121.9 L210.1 122.2 L210.7 121.2 L211.2 121.5 L211.8 120.5 L212.3 119.7 L212.9 120.3 L213.4 119.0 L214.0 119.8 L214.5 118.1 L215.0 118.6 L215.6 118.4 L216.1 117.6 L216.7 117.6 L217.2 117.0 L217.7 117.7 L218.3 116.7 L218.8 116.6 L219.3 116.0 L219.9 117.2 L220.4 116.5 L220.9 116.2 L221.5 116.2 L222.0 116.9 L222.5 116.1 L223.0 116.8 L223.6 117.1 L224.1 116.3 L224.6 117.6 L225.1 126.7 L225.7 127.5 L226.2 127.2 L226.7 126.8 L227.2 126.5 L227.8 126.1 L228.3 125.7 L228.8 125.4 L229.3 125.0 L229.8 124.7 L230.3 124.3 L230.8 124.0 L231.4 123.6 L231.9 123.3 L232.4 122.9 L232.9 122.5 L233.4 122.2 L233.9 121.8 L234.4 121.5 L234.9 121.1 L235.4 120.8 L235.9 120.5 L236.4 120.1 L236.9 119.8 L237.4 119.4 L237.9 119.1 L238.4 118.7 L238.9 118.4 L239.4 118.0 L239.9 117.7 M110.7 196.5 L111.4 196.0 L112.1 195.5 L112.9 195.0 L113.6 194.5 L114.3 194.0 L115.1 193.5 L115.8 193.0 L116.5 192.5 L117.2 192.1 L118.0 191.6 L118.7 191.1 L119.4 190.6 L120.1 190.1 L120.8 189.6 L121.5 189.1 L122.3 188.7 L123.0 188.2 L123.7 187.7 L124.4 187.2 L125.1 186.7 L125.8 185.9 L126.5 175.1 L127.2 173.7 L127.9 172.3 L128.6 171.7 L129.3 170.4 L130.0 169.2 L130.7 168.6 L131.4 167.9 L132.1 167.5 L132.8 166.5 L133.5 166.0 L134.2 164.7 L134.8 164.5 L135.5 163.8 L136.2 162.8 L136.9 162.6 L137.6 162.3 L138.3 161.0 L138.9 161.1 L139.6 159.9 L140.3 159.4 L141.0 159.4 L141.6 158.5 L142.3 159.2 L143.0 158.3 L143.7 157.2 L144.3 157.3 L145.0 157.0 L145.7 156.5 L146.3 156.1 L147.0 155.9 L147.6 155.8 L148.3 155.6 L149.0 155.5 L149.6 155.3 L150.3 155.1 L150.9 154.9 L151.6 154.7 L152.2 154.7 L152.9 154.8 L153.5 155.0 L154.2 155.1 L154.8 155.2 L155.5 155.3 L156.1 155.7 L156.7 156.3 L157.4 157.2 L158.0 157.5 L158.7 158.2 L159.3 158.7 L159.9 158.7 L160.6 160.8 L161.2 162.3 L161.8 161.9 L162.5 161.5 L163.1 161.1 L163.7 160.6 L164.4 160.2 L165.0 159.8 L165.6 159.4 L166.2 158.9 L166.9 158.5 L167.5 158.1 L168.1 157.7 L168.7 157.3 L169.3 156.8 L169.9 156.4 L170.6 156.0 L171.2 155.6 L171.8 155.2 L172.4 154.8 L173.0 154.4 L173.6 153.9 L174.2 153.5 L174.8 153.1 L175.4 152.7 L176.0 152.3 L176.6 151.9 L177.3 151.5 L177.9 151.1 L178.5 150.7 L179.0 150.3 L179.6 149.9 L180.2 149.5 L180.8 149.1 L181.4 148.7 L182.0 148.3 L182.6 147.9 L183.2 147.5 L183.8 147.1 L184.4 146.7 L185.0 146.3 L185.6 145.9 L186.1 145.5 L186.7 145.1 L187.3 144.7 L187.9 144.3 L188.5 143.9 L189.1 143.5 L189.6 143.1 L190.2 140.8 L190.8 138.8 L191.4 137.1 L191.9 135.6 L192.5 133.8 L193.1 132.0 L193.6 130.7 L194.2 130.0 L194.8 128.7 L195.4 127.8 L195.9 126.9 L196.5 125.9 L197.0 125.0 L197.6 124.0 L198.2 123.2 L198.7 122.5 L199.3 121.9 L199.9 121.3 L200.4 120.7 L201.0 120.0 L201.5 119.4 L202.1 119.0 L202.6 118.6 L203.2 117.2 L203.7 117.3 L204.3 116.6 L204.8 117.0 L205.4 115.4 L205.9 115.8 L206.5 115.0 L207.0 115.1 L207.6 114.5 L208.1 113.6 L208.7 113.4 L209.2 113.6 L209.7 112.9 L210.3 113.1 L210.8 112.9 L211.4 112.4 L211.9 112.7 L212.4 112.4 L213.0 111.8 L213.5 111.6 L214.0 112.6 L214.6 111.6 L215.1 111.4 L215.6 111.9 L216.1 112.5 L216.7 111.8 L217.2 112.7 L217.7 112.4 L218.3 113.6 L218.8 123.2 L219.3 123.1 L219.8 122.7 L220.3 122.4 L220.9 122.0 L221.4 121.7 L221.9 121.3 L222.4 121.0 L222.9 120.6 L223.5 120.3 L224.0 119.9 L224.5 119.6 L225.0 119.2 L225.5 118.9 L226.0 118.5 L226.5 118.2 L227.0 117.8 L227.5 117.5 L228.1 117.1 L228.6 116.8 L229.1 116.5 L229.6 116.1 L230.1 115.8 L230.6 115.4 L231.1 115.1 L231.6 114.8 L232.1 114.4 M102.2 191.9 L103.0 191.5 L103.7 191.0 L104.5 190.5 L105.2 190.0 L105.9 189.5 L106.7 189.0 L107.4 188.5 L108.1 188.1 L108.8 187.6 L109.6 187.1 L110.3 186.6 L111.0 186.1 L111.7 185.7 L112.5 185.2 L113.2 184.7 L113.9 184.2 L114.6 183.8 L115.3 183.3 L116.0 182.8 L116.7 182.4 L117.4 176.2 L118.2 170.2 L118.9 169.0 L119.6 167.8 L120.3 167.3 L121.0 165.2 L121.7 165.4 L122.4 164.6 L123.1 163.9 L123.8 163.4 L124.5 162.2 L125.2 160.9 L125.8 160.2 L126.5 160.4 L127.2 159.9 L127.9 159.1 L128.6 157.9 L129.3 157.8 L130.0 156.6 L130.6 156.4 L131.3 155.9 L132.0 155.2 L132.7 154.8 L133.4 155.0 L134.0 154.8 L134.7 154.1 L135.4 153.7 L136.1 153.9 L136.7 153.1 L137.4 152.4 L138.1 152.9 L138.7 152.2 L139.4 152.0 L140.1 151.8 L140.7 151.6 L141.4 151.5 L142.0 151.3 L142.7 151.2 L143.3 151.3 L144.0 151.4 L144.7 151.6 L145.3 151.7 L146.0 151.8 L146.6 152.1 L147.3 153.2 L147.9 153.7 L148.5 154.1 L149.2 153.8 L149.8 156.0 L150.5 156.6 L151.1 157.4 L151.8 159.2 L152.4 158.8 L153.0 158.4 L153.7 157.9 L154.3 157.5 L154.9 157.1 L155.6 156.7 L156.2 156.3 L156.8 155.9 L157.5 155.4 L158.1 155.0 L158.7 154.6 L159.3 154.2 L160.0 153.8 L160.6 153.4 L161.2 153.0 L161.8 152.6 L162.4 152.1 L163.1 151.7 L163.7 151.3 L164.3 150.9 L164.9 150.5 L165.5 150.1 L166.1 149.7 L166.7 149.3 L167.3 148.9 L168.0 148.5 L168.6 148.1 L169.2 147.7 L169.8 147.3 L170.4 146.9 L171.0 146.5 L171.6 146.1 L172.2 145.7 L172.8 145.3 L173.4 144.9 L174.0 144.5 L174.6 144.1 L175.2 143.7 L175.7 143.3 L176.3 143.0 L176.9 142.6 L177.5 142.2 L178.1 141.8 L178.7 141.4 L179.3 141.0 L179.9 140.6 L180.4 140.2 L181.0 139.8 L181.6 139.5 L182.2 139.1 L182.8 138.7 L183.4 136.1 L183.9 134.5 L184.5 132.4 L185.1 131.4 L185.7 129.3 L186.2 128.4 L186.8 126.9 L187.4 125.2 L187.9 124.1 L188.5 123.1 L189.1 122.2 L189.6 121.2 L190.2 120.3 L190.8 119.4 L191.3 118.7 L191.9 118.0 L192.5 117.4 L193.0 116.8 L193.6 116.2 L194.1 115.5 L194.7 114.5 L195.3 114.8 L195.8 113.7 L196.4 113.6 L196.9 113.1 L197.5 112.1 L198.0 112.6 L198.6 111.0 L199.1 110.6 L199.7 110.6 L200.2 111.2 L200.8 110.1 L201.3 109.9 L201.9 109.4 L202.4 109.9 L202.9 108.6 L203.5 108.4 L204.0 109.3 L204.6 108.8 L205.1 109.1 L205.6 107.9 L206.2 107.7 L206.7 107.6 L207.2 108.1 L207.8 107.9 L208.3 107.9 L208.8 108.2 L209.4 107.9 L209.9 108.7 L210.4 109.4 L211.0 114.0 L211.5 119.7 L212.0 119.4 L212.5 119.0 L213.1 118.7 L213.6 118.3 L214.1 118.0 L214.6 117.6 L215.1 117.3 L215.7 116.9 L216.2 116.6 L216.7 116.3 L217.2 115.9 L217.7 115.6 L218.2 115.2 L218.8 114.9 L219.3 114.6 L219.8 114.2 L220.3 113.9 L220.8 113.5 L221.3 113.2 L221.8 112.9 L222.3 112.5 L222.8 112.2 L223.3 111.9 L223.8 111.5 L224.3 111.2 M93.9 187.5 L94.7 187.0 L95.4 186.5 L96.2 186.0 L96.9 185.6 L97.6 185.1 L98.4 184.6 L99.1 184.1 L99.8 183.7 L100.6 183.2 L101.3 182.7 L102.0 182.2 L102.8 181.8 L103.5 181.3 L104.2 180.8 L104.9 180.4 L105.6 179.9 L106.4 179.4 L107.1 179.0 L107.8 178.5 L108.5 178.0 L109.2 177.6 L109.9 175.6 L110.6 165.2 L111.3 164.1 L112.1 163.5 L112.8 161.8 L113.5 160.9 L114.2 160.7 L114.9 160.4 L115.6 159.5 L116.3 158.7 L117.0 157.8 L117.7 156.8 L118.3 155.3 L119.0 155.7 L119.7 154.2 L120.4 154.0 L121.1 153.2 L121.8 153.3 L122.5 153.4 L123.2 151.7 L123.8 152.0 L124.5 151.6 L125.2 150.1 L125.9 149.9 L126.6 150.2 L127.2 149.8 L127.9 148.4 L128.6 149.1 L129.3 148.1 L129.9 148.6 L130.6 147.2 L131.3 148.0 L131.9 147.3 L132.6 147.1 L133.3 146.9 L133.9 146.7 L134.6 146.5 L135.2 146.3 L135.9 146.2 L136.6 146.2 L137.2 146.3 L137.9 146.4 L138.5 146.5 L139.2 146.7 L139.8 146.8 L140.5 147.1 L141.1 147.6 L141.8 148.8 L142.4 148.5 L143.0 148.5 L143.7 150.4 L144.3 150.8 L145.0 150.8 L145.6 154.0 L146.2 153.6 L146.9 153.2 L147.5 152.8 L148.2 152.4 L148.8 152.0 L149.4 151.6 L150.0 151.2 L150.7 150.8 L151.3 150.4 L151.9 149.9 L152.6 149.5 L153.2 149.1 L153.8 148.7 L154.4 148.3 L155.0 147.9 L155.7 147.5 L156.3 147.1 L156.9 146.7 L157.5 146.3 L158.1 145.9 L158.7 145.5 L159.4 145.1 L160.0 144.7 L160.6 144.4 L161.2 144.0 L161.8 143.6 L162.4 143.2 L163.0 142.8 L163.6 142.4 L164.2 142.0 L164.8 141.6 L165.4 141.2 L166.0 140.8 L166.6 140.4 L167.2 140.1 L167.8 139.7 L168.4 139.3 L169.0 138.9 L169.6 138.5 L170.2 138.1 L170.8 137.8 L171.4 137.4 L172.0 137.0 L172.5 136.6 L173.1 136.2 L173.7 132.4 L174.3 131.3 L174.9 129.4 L175.5 128.1 L176.0 126.3 L176.6 125.8 L177.2 123.9 L177.8 123.0 L178.4 121.8 L178.9 120.9 L179.5 120.0 L180.1 119.1 L180.6 118.2 L181.2 117.3 L181.8 116.5 L182.4 115.8 L182.9 115.2 L183.5 114.6 L184.1 114.0 L184.6 113.4 L185.2 112.8 L185.7 112.0 L186.3 111.3 L186.9 111.4 L187.4 110.4 L188.0 110.0 L188.5 110.0 L189.1 110.1 L189.7 108.3 L190.2 108.2 L190.8 108.5 L191.3 107.5 L191.9 107.9 L192.4 107.3 L193.0 106.5 L193.5 106.9 L194.1 106.8 L194.6 106.5 L195.2 106.6 L195.7 106.1 L196.2 105.9 L196.8 106.0 L197.3 106.1 L197.9 105.5 L198.4 105.8 L199.0 105.0 L199.5 104.6 L200.0 105.6 L200.6 105.4 L201.1 105.7 L201.6 106.6 L202.2 106.9 L202.7 114.3 L203.2 116.8 L203.8 116.4 L204.3 116.1 L204.8 115.7 L205.3 115.4 L205.9 115.0 L206.4 114.7 L206.9 114.4 L207.4 114.0 L208.0 113.7 L208.5 113.3 L209.0 113.0 L209.5 112.7 L210.0 112.3 L210.6 112.0 L211.1 111.7 L211.6 111.3 L212.1 111.0 L212.6 110.7 L213.1 110.3 L213.7 110.0 L214.2 109.7 L214.7 109.3 L215.2 109.0 L215.7 108.7 L216.2 108.4 L216.7 108.0 M85.8 183.1 L86.5 182.6 L87.3 182.1 L88.0 181.6 L88.8 181.2 L89.5 180.7 L90.2 180.2 L91.0 179.8 L91.7 179.3 L92.4 178.8 L93.2 178.4 L93.9 177.9 L94.6 177.5 L95.4 177.0 L96.1 176.5 L96.8 176.1 L97.5 175.6 L98.2 175.2 L99.0 174.7 L99.7 174.3 L100.4 173.8 L101.1 173.3 L101.8 172.9 L102.5 172.4 L103.3 172.0 L104.0 171.6 L104.7 159.6 L105.4 159.6 L106.1 157.8 L106.8 156.3 L107.5 155.3 L108.2 155.8 L108.9 154.3 L109.6 153.8 L110.3 152.5 L111.0 152.8 L111.7 151.8 L112.4 150.2 L113.1 150.1 L113.7 149.5 L114.4 148.2 L115.1 148.7 L115.8 148.5 L116.5 147.5 L117.2 147.3 L117.8 146.9 L118.5 145.7 L119.2 144.6 L119.9 144.7 L120.6 144.1 L121.2 144.2 L121.9 143.5 L122.6 142.9 L123.3 142.8 L123.9 142.1 L124.6 142.2 L125.3 142.4 L125.9 141.4 L126.6 141.3 L127.2 141.0 L127.9 140.8 L128.6 140.6 L129.2 140.4 L129.9 140.2 L130.5 140.0 L131.2 139.8 L131.8 139.6 L132.5 139.4 L133.1 139.4 L133.8 139.4 L134.4 139.5 L135.1 139.5 L135.7 139.5 L136.4 139.5 L137.0 139.5 L137.7 139.5 L138.3 139.7 L138.9 140.5 L139.6 140.0 L140.2 139.9 L140.9 141.1 L141.5 140.7 L142.1 140.6 L142.8 141.3 L143.4 141.7 L144.0 141.7 L144.7 141.6 L145.3 141.5 L145.9 141.8 L146.5 142.3 L147.2 143.7 L147.8 143.8 L148.4 143.4 L149.0 143.0 L149.6 142.6 L150.3 142.2 L150.9 141.8 L151.5 141.4 L152.1 141.0 L152.7 140.7 L153.3 140.3 L153.9 139.9 L154.5 139.5 L155.2 139.1 L155.8 138.7 L156.4 137.9 L157.0 135.7 L157.6 135.1 L158.2 133.2 L158.8 132.1 L159.4 132.4 L160.0 131.2 L160.6 130.3 L161.2 128.3 L161.8 127.3 L162.4 127.6 L163.0 126.2 L163.6 125.5 L164.1 124.1 L164.7 123.0 L165.3 122.0 L165.9 121.2 L166.5 120.4 L167.1 119.6 L167.7 118.8 L168.3 118.0 L168.8 117.2 L169.4 116.4 L170.0 115.7 L170.6 115.0 L171.2 114.5 L171.7 113.9 L172.3 113.3 L172.9 112.7 L173.5 112.2 L174.0 111.6 L174.6 111.0 L175.2 109.8 L175.8 110.6 L176.3 110.0 L176.9 109.1 L177.5 108.6 L178.0 107.9 L178.6 107.9 L179.2 107.9 L179.7 107.1 L180.3 105.8 L180.8 105.8 L181.4 106.5 L182.0 105.2 L182.5 105.6 L183.1 104.7 L183.6 105.5 L184.2 104.0 L184.7 104.8 L185.3 104.1 L185.8 103.5 L186.4 103.5 L186.9 104.0 L187.5 103.9 L188.0 103.7 L188.6 103.9 L189.1 103.6 L189.7 103.7 L190.2 103.1 L190.8 103.3 L191.3 103.2 L191.8 103.9 L192.4 104.5 L192.9 104.4 L193.5 114.5 L194.0 114.5 L194.5 114.2 L195.1 113.8 L195.6 113.5 L196.1 113.1 L196.7 112.8 L197.2 112.5 L197.7 112.1 L198.3 111.8 L198.8 111.5 L199.3 111.1 L199.8 110.8 L200.4 110.5 L200.9 110.1 L201.4 109.8 L201.9 109.5 L202.5 109.1 L203.0 108.8 L203.5 108.5 L204.0 108.1 L204.5 107.8 L205.1 107.5 L205.6 107.2 L206.1 106.8 L206.6 106.5 L207.1 106.2 L207.6 105.9 L208.2 105.5 L208.7 105.2 L209.2 104.9 M77.7 178.7 L78.5 178.3 L79.2 177.8 L80.0 177.3 L80.7 176.9 L81.5 176.4 L82.2 175.9 L83.0 175.5 L83.7 175.0 L84.4 174.6 L85.2 174.1 L85.9 173.7 L86.6 173.2 L87.4 172.8 L88.1 172.3 L88.8 171.9 L89.5 171.4 L90.3 171.0 L91.0 170.5 L91.7 170.1 L92.4 169.6 L93.1 169.2 L93.9 168.7 L94.6 168.3 L95.3 167.8 L96.0 167.4 L96.7 167.0 L97.4 166.5 L98.1 166.1 L98.8 165.6 L99.5 165.6 L100.2 154.1 L100.9 152.4 L101.6 152.0 L102.3 150.3 L103.0 149.3 L103.7 149.3 L104.4 147.9 L105.1 148.0 L105.8 147.4 L106.5 146.3 L107.2 145.4 L107.9 144.2 L108.6 144.7 L109.3 143.2 L109.9 142.9 L110.6 142.9 L111.3 141.2 L112.0 141.1 L112.7 141.4 L113.3 139.8 L114.0 140.5 L114.7 140.0 L115.4 139.2 L116.0 137.8 L116.7 138.6 L117.4 136.8 L118.0 136.8 L118.7 137.3 L119.4 136.2 L120.0 136.0 L120.7 135.5 L121.4 134.9 L122.0 134.7 L122.7 133.8 L123.3 134.7 L124.0 133.4 L124.6 133.7 L125.3 132.8 L126.0 132.3 L126.6 132.6 L127.3 132.4 L127.9 132.1 L128.6 131.9 L129.2 131.6 L129.8 131.3 L130.5 131.1 L131.1 130.8 L131.8 130.5 L132.4 130.2 L133.0 130.0 L133.7 129.7 L134.3 129.4 L135.0 129.1 L135.6 128.9 L136.2 128.7 L136.9 128.5 L137.5 128.2 L138.1 128.0 L138.7 127.8 L139.4 127.5 L140.0 127.2 L140.6 126.9 L141.2 126.6 L141.9 126.3 L142.5 125.9 L143.1 125.6 L143.7 125.2 L144.3 124.8 L145.0 124.4 L145.6 124.0 L146.2 123.6 L146.8 123.2 L147.4 122.7 L148.0 122.2 L148.6 121.7 L149.2 121.2 L149.8 120.7 L150.5 120.2 L151.1 119.7 L151.7 119.1 L152.3 118.6 L152.9 118.0 L153.5 117.5 L154.1 117.0 L154.7 116.6 L155.3 116.1 L155.9 115.6 L156.4 115.1 L157.0 114.6 L157.6 114.1 L158.2 113.6 L158.8 113.1 L159.4 112.6 L160.0 112.1 L160.6 111.5 L161.2 110.3 L161.8 110.9 L162.3 110.2 L162.9 109.1 L163.5 108.6 L164.1 109.1 L164.7 107.8 L165.2 108.2 L165.8 107.8 L166.4 106.8 L167.0 106.8 L167.5 106.4 L168.1 106.1 L168.7 105.7 L169.3 105.9 L169.8 105.7 L170.4 104.4 L171.0 104.4 L171.5 104.0 L172.1 103.5 L172.7 104.1 L173.2 103.8 L173.8 103.4 L174.4 103.1 L174.9 102.2 L175.5 102.6 L176.0 102.6 L176.6 102.0 L177.1 102.6 L177.7 102.6 L178.3 101.7 L178.8 101.5 L179.4 102.1 L179.9 101.5 L180.5 102.6 L181.0 102.2 L181.6 102.1 L182.1 102.8 L182.7 103.0 L183.2 113.1 L183.8 112.9 L184.3 112.6 L184.8 112.3 L185.4 111.9 L185.9 111.6 L186.5 111.3 L187.0 110.9 L187.5 110.6 L188.1 110.3 L188.6 109.9 L189.2 109.6 L189.7 109.3 L190.2 108.9 L190.8 108.6 L191.3 108.3 L191.8 107.9 L192.3 107.6 L192.9 107.3 L193.4 107.0 L193.9 106.6 L194.5 106.3 L195.0 106.0 L195.5 105.7 L196.0 105.3 L196.6 105.0 L197.1 104.7 L197.6 104.4 L198.1 104.0 L198.6 103.7 L199.2 103.4 L199.7 103.1 L200.2 102.7 L200.7 102.4 L201.2 102.1 L201.7 101.8 M69.8 174.4 L70.6 174.0 L71.3 173.5 L72.1 173.1 L72.8 172.6 L73.6 172.2 L74.3 171.7 L75.1 171.3 L75.8 170.8 L76.5 170.4 L77.3 169.9 L78.0 169.5 L78.7 169.0 L79.5 168.6 L80.2 168.1 L80.9 167.7 L81.7 167.3 L82.4 166.8 L83.1 166.4 L83.8 165.9 L84.6 165.5 L85.3 165.1 L86.0 164.6 L86.7 164.2 L87.4 163.7 L88.1 163.3 L88.9 162.9 L89.6 162.4 L90.3 162.0 L91.0 161.6 L91.7 161.2 L92.4 160.7 L93.1 160.3 L93.8 159.9 L94.5 159.4 L95.2 159.0 L95.9 158.6 L96.6 158.2 L97.3 157.6 L98.0 147.4 L98.7 145.2 L99.4 145.2 L100.1 143.0 L100.8 143.3 L101.4 142.3 L102.1 141.6 L102.8 139.8 L103.5 140.2 L104.2 139.1 L104.9 137.9 L105.5 137.3 L106.2 138.0 L106.9 136.7 L107.6 136.0 L108.3 135.2 L108.9 135.1 L109.6 134.6 L110.3 134.7 L110.9 134.1 L111.6 132.9 L112.3 133.2 L112.9 132.5 L113.6 131.8 L114.3 131.8 L114.9 131.4 L115.6 129.6 L116.2 129.9 L116.9 129.8 L117.6 128.6 L118.2 129.2 L118.9 128.4 L119.5 126.9 L120.2 126.5 L120.8 126.5 L121.5 127.0 L122.1 126.3 L122.8 126.4 L123.4 125.7 L124.1 125.7 L124.7 125.2 L125.3 124.1 L126.0 124.5 L126.6 124.0 L127.3 122.6 L127.9 123.1 L128.5 122.7 L129.2 122.7 L129.8 121.3 L130.4 121.1 L131.1 120.9 L131.7 120.4 L132.3 120.8 L133.0 120.2 L133.6 119.4 L134.2 118.5 L134.8 118.3 L135.4 118.2 L136.1 118.0 L136.7 118.3 L137.3 116.7 L137.9 117.5 L138.5 117.0 L139.2 115.8 L139.8 115.3 L140.4 114.9 L141.0 115.0 L141.6 115.1 L142.2 114.9 L142.8 113.3 L143.4 112.7 L144.0 113.4 L144.6 112.1 L145.3 112.4 L145.9 112.1 L146.5 111.4 L147.1 111.8 L147.7 110.7 L148.3 110.7 L148.9 109.5 L149.5 109.5 L150.0 108.5 L150.6 108.1 L151.2 108.5 L151.8 108.2 L152.4 106.9 L153.0 107.2 L153.6 107.5 L154.2 107.3 L154.8 105.6 L155.4 105.9 L155.9 106.4 L156.5 105.4 L157.1 105.1 L157.7 104.9 L158.3 103.8 L158.8 103.6 L159.4 104.5 L160.0 104.1 L160.6 103.5 L161.2 102.6 L161.7 102.6 L162.3 102.3 L162.9 102.4 L163.4 102.8 L164.0 101.8 L164.6 102.8 L165.2 101.7 L165.7 102.3 L166.3 101.8 L166.9 100.9 L167.4 101.4 L168.0 102.2 L168.5 101.7 L169.1 101.5 L169.7 102.5 L170.2 102.4 L170.8 103.3 L171.3 112.7 L171.9 112.4 L172.4 112.1 L173.0 111.7 L173.6 111.4 L174.1 111.1 L174.7 110.7 L175.2 110.4 L175.8 110.1 L176.3 109.7 L176.9 109.4 L177.4 109.1 L177.9 108.7 L178.5 108.4 L179.0 108.1 L179.6 107.7 L180.1 107.4 L180.7 107.1 L181.2 106.7 L181.7 106.4 L182.3 106.1 L182.8 105.8 L183.3 105.4 L183.9 105.1 L184.4 104.8 L184.9 104.5 L185.5 104.1 L186.0 103.8 L186.5 103.5 L187.1 103.2 L187.6 102.9 L188.1 102.5 L188.7 102.2 L189.2 101.9 L189.7 101.6 L190.2 101.3 L190.7 100.9 L191.3 100.6 L191.8 100.3 L192.3 100.0 L192.8 99.7 L193.4 99.4 L193.9 99.0 L194.4 98.7 M62.0 170.2 L62.8 169.8 L63.5 169.3 L64.3 168.9 L65.0 168.4 L65.8 168.0 L66.5 167.6 L67.3 167.1 L68.0 166.7 L68.8 166.2 L69.5 165.8 L70.2 165.3 L71.0 164.9 L71.7 164.5 L72.4 164.0 L73.2 163.6 L73.9 163.2 L74.6 162.7 L75.4 162.3 L76.1 161.9 L76.8 161.4 L77.5 161.0 L78.2 160.6 L79.0 160.1 L79.7 159.7 L80.4 159.3 L81.1 158.9 L81.8 158.4 L82.5 158.0 L83.3 157.6 L84.0 157.2 L84.7 156.7 L85.4 156.3 L86.1 155.9 L86.8 155.5 L87.5 155.1 L88.2 154.6 L88.9 154.2 L89.6 153.8 L90.3 153.4 L91.0 153.0 L91.7 152.6 L92.4 152.2 L93.1 151.7 L93.8 151.3 L94.4 150.9 L95.1 150.5 L95.8 150.1 L96.5 149.7 L97.2 149.3 L97.9 149.1 L98.6 138.1 L99.2 137.2 L99.9 135.8 L100.6 135.8 L101.3 134.0 L101.9 133.1 L102.6 133.1 L103.3 132.4 L104.0 131.1 L104.6 131.4 L105.3 130.1 L106.0 130.3 L106.6 129.1 L107.3 129.1 L108.0 128.2 L108.6 127.1 L109.3 127.9 L109.9 126.3 L110.6 126.1 L111.3 125.8 L111.9 125.4 L112.6 125.3 L113.2 124.5 L113.9 123.5 L114.5 123.8 L115.2 122.5 L115.8 121.6 L116.5 121.2 L117.1 120.9 L117.8 120.6 L118.4 121.1 L119.0 119.5 L119.7 120.3 L120.3 118.9 L121.0 118.5 L121.6 118.5 L122.2 118.2 L122.9 118.3 L123.5 117.4 L124.1 117.4 L124.8 117.2 L125.4 116.8 L126.0 115.5 L126.6 114.9 L127.3 115.7 L127.9 115.5 L128.5 114.8 L129.1 114.6 L129.8 114.1 L130.4 113.2 L131.0 113.0 L131.6 112.7 L132.2 112.6 L132.9 111.6 L133.5 111.8 L134.1 111.3 L134.7 110.8 L135.3 109.9 L135.9 110.5 L136.5 109.4 L137.1 109.7 L137.7 108.5 L138.4 108.9 L139.0 108.4 L139.6 107.5 L140.2 107.5 L140.8 108.0 L141.4 107.6 L142.0 106.0 L142.6 107.1 L143.2 106.5 L143.8 105.3 L144.4 106.4 L144.9 106.0 L145.5 105.7 L146.1 105.6 L146.7 104.8 L147.3 104.5 L147.9 104.6 L148.5 104.7 L149.1 103.5 L149.7 103.3 L150.2 103.5 L150.8 103.9 L151.4 103.1 L152.0 102.8 L152.6 103.1 L153.1 102.4 L153.7 103.1 L154.3 102.9 L154.9 103.5 L155.5 102.9 L156.0 102.6 L156.6 103.2 L157.2 113.9 L157.7 113.2 L158.3 112.9 L158.9 112.5 L159.4 112.2 L160.0 111.9 L160.6 111.5 L161.1 111.2 L161.7 110.9 L162.3 110.5 L162.8 110.2 L163.4 109.8 L164.0 109.5 L164.5 109.2 L165.1 108.8 L165.6 108.5 L166.2 108.2 L166.7 107.9 L167.3 107.5 L167.8 107.2 L168.4 106.9 L169.0 106.5 L169.5 106.2 L170.1 105.9 L170.6 105.6 L171.1 105.2 L171.7 104.9 L172.2 104.6 L172.8 104.3 L173.3 103.9 L173.9 103.6 L174.4 103.3 L174.9 103.0 L175.5 102.6 L176.0 102.3 L176.6 102.0 L177.1 101.7 L177.6 101.4 L178.2 101.0 L178.7 100.7 L179.2 100.4 L179.8 100.1 L180.3 99.8 L180.8 99.5 L181.4 99.1 L181.9 98.8 L182.4 98.5 L182.9 98.2 L183.5 97.9 L184.0 97.6 L184.5 97.3 L185.0 97.0 L185.6 96.6 L186.1 96.3 L186.6 96.0 L187.1 95.7 M54.4 166.1 L55.1 165.6 L55.9 165.2 L56.6 164.8 L57.4 164.3 L58.1 163.9 L58.9 163.4 L59.6 163.0 L60.4 162.6 L61.1 162.1 L61.8 161.7 L62.6 161.3 L63.3 160.8 L64.1 160.4 L64.8 160.0 L65.5 159.6 L66.3 159.1 L67.0 158.7 L67.7 158.3 L68.4 157.9 L69.2 157.4 L69.9 157.0 L70.6 156.6 L71.3 156.2 L72.1 155.7 L72.8 155.3 L73.5 154.9 L74.2 154.5 L74.9 154.1 L75.6 153.6 L76.4 153.2 L77.1 152.8 L77.8 152.4 L78.5 152.0 L79.2 151.6 L79.9 151.2 L80.6 150.8 L81.3 150.3 L82.0 149.9 L82.7 149.5 L83.4 149.1 L84.1 148.7 L84.8 148.3 L85.5 147.9 L86.2 147.5 L86.9 147.1 L87.6 146.7 L88.3 146.3 L88.9 145.9 L89.6 145.5 L90.3 145.1 L91.0 144.7 L91.7 144.3 L92.4 143.9 L93.0 143.5 L93.7 143.1 L94.4 142.7 L95.1 142.3 L95.7 141.9 L96.4 141.5 L97.1 141.1 L97.8 140.7 L98.4 140.3 L99.1 140.0 L99.8 139.6 L100.4 139.2 L101.1 138.8 L101.8 138.4 L102.4 138.0 L103.1 137.6 L103.7 137.2 L104.4 136.1 L105.1 131.6 L105.7 125.9 L106.4 124.9 L107.0 123.8 L107.7 124.0 L108.3 122.8 L109.0 122.1 L109.6 121.9 L110.3 120.8 L110.9 120.9 L111.6 120.4 L112.2 120.2 L112.8 118.7 L113.5 119.1 L114.1 118.1 L114.8 118.1 L115.4 116.8 L116.0 116.4 L116.7 117.3 L117.3 115.4 L117.9 115.6 L118.6 116.0 L119.2 114.9 L119.8 115.2 L120.4 114.1 L121.1 114.2 L121.7 113.6 L122.3 113.3 L122.9 112.6 L123.6 111.9 L124.2 111.4 L124.8 112.0 L125.4 111.3 L126.0 111.8 L126.7 111.0 L127.3 109.9 L127.9 110.8 L128.5 109.5 L129.1 109.5 L129.7 109.8 L130.3 108.8 L130.9 109.3 L131.6 108.2 L132.2 109.2 L132.8 108.9 L133.4 107.8 L134.0 108.1 L134.6 108.3 L135.2 107.7 L135.8 107.9 L136.4 107.8 L137.0 112.9 L137.6 117.0 L138.2 117.1 L138.8 116.8 L139.4 116.4 L139.9 116.1 L140.5 115.8 L141.1 115.4 L141.7 115.1 L142.3 114.7 L142.9 114.4 L143.5 114.0 L144.1 113.7 L144.6 113.4 L145.2 113.0 L145.8 112.7 L146.4 112.3 L147.0 112.0 L147.6 111.7 L148.1 111.3 L148.7 111.0 L149.3 110.6 L149.9 110.3 L150.4 110.0 L151.0 109.6 L151.6 109.3 L152.1 109.0 L152.7 108.6 L153.3 108.3 L153.8 108.0 L154.4 107.6 L155.0 107.3 L155.5 107.0 L156.1 106.7 L156.7 106.3 L157.2 106.0 L157.8 105.7 L158.4 105.3 L158.9 105.0 L159.5 104.7 L160.0 104.4 L160.6 104.0 L161.1 103.7 L161.7 103.4 L162.2 103.1 L162.8 102.8 L163.3 102.4 L163.9 102.1 L164.4 101.8 L165.0 101.5 L165.5 101.2 L166.1 100.8 L166.6 100.5 L167.2 100.2 L167.7 99.9 L168.3 99.6 L168.8 99.2 L169.3 98.9 L169.9 98.6 L170.4 98.3 L171.0 98.0 L171.5 97.7 L172.0 97.4 L172.6 97.0 L173.1 96.7 L173.6 96.4 L174.2 96.1 L174.7 95.8 L175.2 95.5 L175.8 95.2 L176.3 94.9 L176.8 94.6 L177.3 94.3 L177.9 94.0 L178.4 93.6 L178.9 93.3 L179.4 93.0 L180.0 92.7 M46.8 162.0 L47.6 161.6 L48.3 161.1 L49.1 160.7 L49.8 160.3 L50.6 159.8 L51.3 159.4 L52.1 159.0 L52.8 158.5 L53.6 158.1 L54.3 157.7 L55.0 157.3 L55.8 156.8 L56.5 156.4 L57.3 156.0 L58.0 155.6 L58.7 155.2 L59.5 154.7 L60.2 154.3 L60.9 153.9 L61.6 153.5 L62.4 153.1 L63.1 152.7 L63.8 152.2 L64.5 151.8 L65.3 151.4 L66.0 151.0 L66.7 150.6 L67.4 150.2 L68.1 149.8 L68.9 149.4 L69.6 149.0 L70.3 148.5 L71.0 148.1 L71.7 147.7 L72.4 147.3 L73.1 146.9 L73.8 146.5 L74.5 146.1 L75.2 145.7 L75.9 145.3 L76.6 144.9 L77.3 144.5 L78.0 144.1 L78.7 143.7 L79.4 143.3 L80.1 142.9 L80.8 142.5 L81.5 142.1 L82.2 141.7 L82.9 141.3 L83.5 140.9 L84.2 140.6 L84.9 140.2 L85.6 139.8 L86.3 139.4 L87.0 139.0 L87.6 138.6 L88.3 138.2 L89.0 137.8 L89.7 137.4 L90.3 137.1 L91.0 136.7 L91.7 136.3 L92.3 135.9 L93.0 135.5 L93.7 135.1 L94.3 134.8 L95.0 134.4 L95.7 134.0 L96.3 133.6 L97.0 133.2 L97.6 132.9 L98.3 132.5 L99.0 132.1 L99.6 131.7 L100.3 131.4 L100.9 131.0 L101.6 130.6 L102.2 130.2 L102.9 129.9 L103.5 129.5 L104.2 129.1 L104.8 128.8 L105.5 128.4 L106.1 128.0 L106.7 127.7 L107.4 127.3 L108.0 126.9 L108.7 126.6 L109.3 126.2 L109.9 125.8 L110.6 125.5 L111.2 125.1 L111.8 124.7 L112.5 124.4 L113.1 124.0 L113.7 123.7 L114.4 123.3 L115.0 122.9 L115.6 122.6 L116.2 122.2 L116.9 121.9 L117.5 121.5 L118.1 121.2 L118.7 120.8 L119.3 120.4 L120.0 120.1 L120.6 119.7 L121.2 119.4 L121.8 119.0 L122.4 118.7 L123.0 118.3 L123.6 118.0 L124.3 117.6 L124.9 117.3 L125.5 116.9 L126.1 116.6 L126.7 116.2 L127.3 115.9 L127.9 115.6 L128.5 115.2 L129.1 114.9 L129.7 114.5 L130.3 114.2 L130.9 113.8 L131.5 113.5 L132.1 113.1 L132.7 112.8 L133.3 112.5 L133.9 112.1 L134.5 111.8 L135.1 111.5 L135.6 111.1 L136.2 110.8 L136.8 110.4 L137.4 110.1 L138.0 109.8 L138.6 109.4 L139.2 109.1 L139.7 108.8 L140.3 108.4 L140.9 108.1 L141.5 107.8 L142.1 107.4 L142.6 107.1 L143.2 106.8 L143.8 106.4 L144.4 106.1 L144.9 105.8 L145.5 105.5 L146.1 105.1 L146.6 104.8 L147.2 104.5 L147.8 104.2 L148.4 103.8 L148.9 103.5 L149.5 103.2 L150.0 102.9 L150.6 102.5 L151.2 102.2 L151.7 101.9 L152.3 101.6 L152.9 101.3 L153.4 100.9 L154.0 100.6 L154.5 100.3 L155.1 100.0 L155.6 99.7 L156.2 99.3 L156.7 99.0 L157.3 98.7 L157.8 98.4 L158.4 98.1 L158.9 97.8 L159.5 97.5 L160.0 97.1 L160.6 96.8 L161.1 96.5 L161.7 96.2 L162.2 95.9 L162.8 95.6 L163.3 95.3 L163.8 95.0 L164.4 94.7 L164.9 94.3 L165.5 94.0 L166.0 93.7 L166.5 93.4 L167.1 93.1 L167.6 92.8 L168.1 92.5 L168.7 92.2 L169.2 91.9 L169.7 91.6 L170.3 91.3 L170.8 91.0 L171.3 90.7 L171.8 90.4 L172.4 90.1 L172.9 89.8 M39.3 158.0 L40.1 157.5 L40.9 157.1 L41.6 156.7 L42.4 156.3 L43.1 155.8 L43.9 155.4 L44.6 155.0 L45.4 154.6 L46.1 154.2 L46.9 153.7 L47.6 153.3 L48.3 152.9 L49.1 152.5 L49.8 152.1 L50.6 151.7 L51.3 151.2 L52.0 150.8 L52.8 150.4 L53.5 150.0 L54.2 149.6 L55.0 149.2 L55.7 148.8 L56.4 148.4 L57.1 148.0 L57.9 147.6 L58.6 147.2 L59.3 146.8 L60.0 146.3 L60.7 145.9 L61.5 145.5 L62.2 145.1 L62.9 144.7 L63.6 144.3 L64.3 143.9 L65.0 143.5 L65.7 143.1 L66.4 142.7 L67.1 142.4 L67.8 142.0 L68.5 141.6 L69.3 141.2 L70.0 140.8 L70.6 140.4 L71.3 140.0 L72.0 139.6 L72.7 139.2 L73.4 138.8 L74.1 138.4 L74.8 138.0 L75.5 137.7 L76.2 137.3 L76.9 136.9 L77.6 136.5 L78.2 136.1 L78.9 135.7 L79.6 135.3 L80.3 135.0 L81.0 134.6 L81.6 134.2 L82.3 133.8 L83.0 133.4 L83.7 133.1 L84.3 132.7 L85.0 132.3 L85.7 131.9 L86.4 131.6 L87.0 131.2 L87.7 130.8 L88.4 130.4 L89.0 130.1 L89.7 129.7 L90.3 129.3 L91.0 128.9 L91.7 128.6 L92.3 128.2 L93.0 127.8 L93.6 127.5 L94.3 127.1 L94.9 126.7 L95.6 126.4 L96.2 126.0 L96.9 125.6 L97.5 125.3 L98.2 124.9 L98.8 124.5 L99.5 124.2 L100.1 123.8 L100.8 123.5 L101.4 123.1 L102.0 122.7 L102.7 122.4 L103.3 122.0 L104.0 121.7 L104.6 121.3 L105.2 121.0 L105.9 120.6 L106.5 120.2 L107.1 119.9 L107.7 119.5 L108.4 119.2 L109.0 118.8 L109.6 118.5 L110.3 118.1 L110.9 117.8 L111.5 117.4 L112.1 117.1 L112.7 116.7 L113.4 116.4 L114.0 116.0 L114.6 115.7 L115.2 115.3 L115.8 115.0 L116.4 114.7 L117.1 114.3 L117.7 114.0 L118.3 113.6 L118.9 113.3 L119.5 112.9 L120.1 112.6 L120.7 112.3 L121.3 111.9 L121.9 111.6 L122.5 111.2 L123.1 110.9 L123.7 110.6 L124.3 110.2 L124.9 109.9 L125.5 109.6 L126.1 109.2 L126.7 108.9 L127.3 108.6 L127.9 108.2 L128.5 107.9 L129.1 107.6 L129.7 107.2 L130.3 106.9 L130.8 106.6 L131.4 106.2 L132.0 105.9 L132.6 105.6 L133.2 105.3 L133.8 104.9 L134.3 104.6 L134.9 104.3 L135.5 103.9 L136.1 103.6 L136.7 103.3 L137.2 103.0 L137.8 102.7 L138.4 102.3 L139.0 102.0 L139.5 101.7 L140.1 101.4 L140.7 101.0 L141.2 100.7 L141.8 100.4 L142.4 100.1 L143.0 99.8 L143.5 99.4 L144.1 99.1 L144.6 98.8 L145.2 98.5 L145.8 98.2 L146.3 97.9 L146.9 97.6 L147.5 97.2 L148.0 96.9 L148.6 96.6 L149.1 96.3 L149.7 96.0 L150.2 95.7 L150.8 95.4 L151.3 95.1 L151.9 94.7 L152.4 94.4 L153.0 94.1 L153.5 93.8 L154.1 93.5 L154.6 93.2 L155.2 92.9 L155.7 92.6 L156.3 92.3 L156.8 92.0 L157.4 91.7 L157.9 91.4 L158.4 91.1 L159.0 90.8 L159.5 90.5 L160.0 90.2 L160.6 89.9 L161.1 89.6 L161.7 89.3 L162.2 89.0 L162.7 88.7 L163.3 88.4 L163.8 88.1 L164.3 87.8 L164.8 87.5 L165.4 87.2 L165.9 86.9 M32.0 154.0 L32.8 153.6 L33.5 153.2 L34.3 152.7 L35.0 152.3 L35.8 151.9 L36.5 151.5 L37.3 151.1 L38.0 150.7 L38.8 150.3 L39.5 149.8 L40.3 149.4 L41.0 149.0 L41.8 148.6 L42.5 148.2 L43.2 147.8 L44.0 147.4 L44.7 147.0 L45.5 146.6 L46.2 146.2 L46.9 145.8 L47.7 145.4 L48.4 145.0 L49.1 144.6 L49.8 144.2 L50.6 143.8 L51.3 143.4 L52.0 143.0 L52.7 142.6 L53.5 142.2 L54.2 141.8 L54.9 141.4 L55.6 141.0 L56.3 140.6 L57.0 140.2 L57.7 139.8 L58.5 139.4 L59.2 139.0 L59.9 138.6 L60.6 138.2 L61.3 137.9 L62.0 137.5 L62.7 137.1 L63.4 136.7 L64.1 136.3 L64.8 135.9 L65.5 135.5 L66.2 135.2 L66.9 134.8 L67.6 134.4 L68.3 134.0 L68.9 133.6 L69.6 133.3 L70.3 132.9 L71.0 132.5 L71.7 132.1 L72.4 131.7 L73.1 131.4 L73.7 131.0 L74.4 130.6 L75.1 130.2 L75.8 129.9 L76.5 129.5 L77.1 129.1 L77.8 128.8 L78.5 128.4 L79.1 128.0 L79.8 127.6 L80.5 127.3 L81.1 126.9 L81.8 126.5 L82.5 126.2 L83.1 125.8 L83.8 125.4 L84.5 125.1 L85.1 124.7 L85.8 124.4 L86.4 124.0 L87.1 123.6 L87.8 123.3 L88.4 122.9 L89.1 122.6 L89.7 122.2 L90.4 121.8 L91.0 121.5 L91.7 121.1 L92.3 120.8 L92.9 120.4 L93.6 120.1 L94.2 119.7 L94.9 119.3 L95.5 119.0 L96.2 118.6 L96.8 118.3 L97.4 117.9 L98.1 117.6 L98.7 117.2 L99.3 116.9 L100.0 116.5 L100.6 116.2 L101.2 115.8 L101.9 115.5 L102.5 115.1 L103.1 114.8 L103.7 114.5 L104.4 114.1 L105.0 113.8 L105.6 113.4 L106.2 113.1 L106.9 112.7 L107.5 112.4 L108.1 112.1 L108.7 111.7 L109.3 111.4 L109.9 111.0 L110.6 110.7 L111.2 110.4 L111.8 110.0 L112.4 109.7 L113.0 109.4 L113.6 109.0 L114.2 108.7 L114.8 108.4 L115.4 108.0 L116.0 107.7 L116.6 107.4 L117.2 107.0 L117.8 106.7 L118.4 106.4 L119.0 106.0 L119.6 105.7 L120.2 105.4 L120.8 105.0 L121.4 104.7 L122.0 104.4 L122.6 104.1 L123.2 103.7 L123.8 103.4 L124.4 103.1 L125.0 102.8 L125.5 102.4 L126.1 102.1 L126.7 101.8 L127.3 101.5 L127.9 101.1 L128.5 100.8 L129.1 100.5 L129.6 100.2 L130.2 99.9 L130.8 99.5 L131.4 99.2 L131.9 98.9 L132.5 98.6 L133.1 98.3 L133.7 98.0 L134.2 97.6 L134.8 97.3 L135.4 97.0 L135.9 96.7 L136.5 96.4 L137.1 96.1 L137.6 95.8 L138.2 95.5 L138.8 95.1 L139.3 94.8 L139.9 94.5 L140.5 94.2 L141.0 93.9 L141.6 93.6 L142.1 93.3 L142.7 93.0 L143.3 92.7 L143.8 92.4 L144.4 92.1 L144.9 91.8 L145.5 91.5 L146.0 91.2 L146.6 90.8 L147.1 90.5 L147.7 90.2 L148.2 89.9 L148.8 89.6 L149.3 89.3 L149.9 89.0 L150.4 88.7 L151.0 88.4 L151.5 88.1 L152.0 87.8 L152.6 87.5 L153.1 87.2 L153.7 86.9 L154.2 86.6 L154.7 86.4 L155.3 86.1 L155.8 85.8 L156.3 85.5 L156.9 85.2 L157.4 84.9 L157.9 84.6 L158.5 84.3 L159.0 84.0 M132.1 189.0 L131.4 187.8 L130.7 181.7 L130.0 177.1 L129.3 176.1 L128.5 176.6 L127.8 174.5 L127.1 174.5 L126.4 173.5 L125.7 173.2 L125.0 172.6 L124.3 173.4 L123.5 172.0 L122.8 172.3 L122.1 171.8 L121.4 171.4 L120.7 170.6 L120.0 170.1 L119.3 169.3 L118.6 170.3 L117.9 169.7 L117.2 169.1 L116.5 168.1 L115.8 168.2 L115.1 167.9 L114.4 167.3 L113.7 167.2 L113.0 167.4 L112.3 167.4 L111.6 166.6 L110.9 166.2 L110.2 166.4 L109.5 167.0 L108.8 171.1 L108.1 175.9 L107.4 175.3 M152.0 192.1 L151.2 191.2 L150.5 181.4 L149.7 180.2 L149.0 179.2 L148.3 178.1 L147.5 177.7 L146.8 177.5 L146.1 176.3 L145.3 176.2 L144.6 174.9 L143.9 175.3 L143.2 174.9 L142.4 173.3 L141.7 173.6 L141.0 172.3 L140.3 172.2 L139.5 171.9 L138.8 172.0 L138.1 170.6 L137.4 171.2 L136.6 169.4 L135.9 169.1 L135.2 169.5 L134.5 169.3 L133.8 167.8 L133.1 167.9 L132.3 168.0 L131.6 167.1 L130.9 167.0 L130.2 166.4 L129.5 165.7 L128.8 164.9 L128.1 164.6 L127.4 165.2 L126.7 164.3 L126.0 164.0 L125.3 162.9 L124.6 163.8 L123.8 162.8 L123.1 161.9 L122.4 162.3 L121.7 162.2 L121.0 161.4 L120.3 161.4 L119.6 160.2 L119.0 161.1 L118.3 160.6 L117.6 160.5 L116.9 159.2 L116.2 159.5 L115.5 158.4 L114.8 158.1 L114.1 157.7 L113.4 158.4 L112.7 158.5 L112.0 157.7 L111.3 156.6 L110.7 156.6 L110.0 157.4 L109.3 156.2 L108.6 155.6 L107.9 155.3 L107.2 155.5 L106.6 155.1 L105.9 155.0 L105.2 155.6 L104.5 155.9 L103.9 154.9 L103.2 155.7 L102.5 155.2 L101.8 154.2 L101.2 154.9 L100.5 155.3 L99.8 164.7 L99.1 165.3 M165.2 192.1 L164.5 186.3 L163.7 181.3 L163.0 180.5 L162.2 180.0 L161.5 178.1 L160.7 178.5 L160.0 178.0 L159.3 176.0 L158.5 175.7 L157.8 175.0 L157.0 174.4 L156.3 174.9 L155.6 174.3 L154.8 173.1 L154.1 173.3 L153.4 172.1 L152.6 171.2 L151.9 170.8 L151.2 170.4 L150.5 170.7 L149.7 169.9 L149.0 168.5 L148.3 169.1 L147.5 168.0 L146.8 168.3 L146.1 166.5 L145.4 167.3 L144.7 166.5 L143.9 165.9 L143.2 165.3 L142.5 164.6 L141.8 164.5 L141.1 164.6 L140.3 164.7 L139.6 163.3 L138.9 162.6 L138.2 163.6 L137.5 162.1 L136.8 162.6 L136.1 161.8 L135.4 161.3 L134.7 160.8 L133.9 159.9 L133.2 160.0 L132.5 160.0 L131.8 159.2 L131.1 159.2 L130.4 158.9 L129.7 158.6 L129.0 158.1 L128.3 158.0 L127.6 157.7 L126.9 157.5 L126.2 156.8 L125.5 156.6 L124.8 155.5 L124.1 155.1 L123.4 155.5 L122.8 154.8 L122.1 154.0 L121.4 154.5 L120.7 153.9 L120.0 153.7 L119.3 153.1 L118.6 152.3 L117.9 153.2 L117.2 151.6 L116.6 151.8 L115.9 151.3 L115.2 151.2 L114.5 150.5 L113.8 151.0 L113.1 150.2 L112.5 150.6 L111.8 150.0 L111.1 149.6 L110.4 150.0 L109.8 150.0 L109.1 148.8 L108.4 148.5 L107.7 148.5 L107.1 148.8 L106.4 148.2 L105.7 148.8 L105.0 147.8 L104.4 147.7 L103.7 147.5 L103.0 147.6 L102.4 147.9 L101.7 147.2 L101.0 147.6 L100.4 147.2 L99.7 147.8 L99.1 148.2 L98.4 147.7 L97.7 152.6 L97.1 157.4 M176.2 191.6 L175.4 183.3 L174.7 180.0 L173.9 179.8 L173.2 178.3 L172.4 178.0 L171.7 177.3 L170.9 176.2 L170.2 175.5 L169.4 174.6 L168.7 174.1 L168.0 173.5 L167.2 173.4 L166.5 172.4 L165.7 172.3 L165.0 171.3 L164.3 171.0 L163.5 170.3 L162.8 170.5 L162.1 169.3 L161.3 169.2 L160.6 168.6 L159.9 168.6 L159.1 167.3 L158.4 166.6 L157.7 166.9 L156.9 166.9 L156.2 165.7 L155.5 166.0 L154.8 164.5 L154.0 165.2 L153.3 164.5 L152.6 163.8 L151.9 164.0 L151.1 163.3 L150.4 163.0 L149.7 161.9 L149.0 161.1 L148.3 161.6 L147.6 160.6 L146.8 161.2 L146.1 160.2 L145.4 160.1 L144.7 159.9 L144.0 158.8 L143.3 158.6 L142.6 159.2 L141.9 158.6 L141.1 157.5 L140.4 156.9 L139.7 157.1 L139.0 156.4 L138.3 155.8 L137.6 155.9 L136.9 155.6 L136.2 155.9 L135.5 155.3 L134.8 154.6 L134.1 153.8 L133.4 154.4 L132.7 153.9 L132.0 154.1 L131.3 152.7 L130.6 152.7 L129.9 151.8 L129.3 152.3 L128.6 151.3 L127.9 150.9 L127.2 150.9 L126.5 150.9 L125.8 150.2 L125.1 149.4 L124.4 149.8 L123.7 149.6 L123.1 148.7 L122.4 148.7 L121.7 147.6 L121.0 147.3 L120.3 146.8 L119.6 146.6 L119.0 146.6 L118.3 147.0 L117.6 145.7 L116.9 145.6 L116.3 145.2 L115.6 145.0 L114.9 144.5 L114.2 145.0 L113.6 144.2 L112.9 144.1 L112.2 144.1 L111.5 143.8 L110.9 143.8 L110.2 143.0 L109.5 142.9 L108.9 142.7 L108.2 141.9 L107.5 142.0 L106.9 141.9 L106.2 141.3 L105.6 142.3 L104.9 141.7 L104.2 142.2 L103.6 141.6 L102.9 140.6 L102.3 141.8 L101.6 140.8 L100.9 140.7 L100.3 141.3 L99.6 141.0 L99.0 141.6 L98.3 142.0 L97.7 143.4 L97.0 152.7 M185.6 191.2 L184.8 180.4 L184.1 178.0 L183.3 178.1 L182.6 177.4 L181.8 175.5 L181.1 175.8 L180.3 173.9 L179.6 173.4 L178.8 173.1 L178.1 172.8 L177.3 172.6 L176.6 172.1 L175.8 171.5 L175.1 170.5 L174.4 169.9 L173.6 168.5 L172.9 168.6 L172.1 167.5 L171.4 167.4 L170.7 167.9 L169.9 166.8 L169.2 167.0 L168.4 166.7 L167.7 165.0 L167.0 165.4 L166.3 165.2 L165.5 164.9 L164.8 163.7 L164.1 163.5 L163.3 163.8 L162.6 162.3 L161.9 162.7 L161.2 161.6 L160.4 161.7 L159.7 161.3 L159.0 161.1 L158.3 160.5 L157.5 159.7 L156.8 159.7 L156.1 160.5 L155.4 159.5 L154.7 159.6 L154.0 159.4 L153.2 159.0 L152.5 158.6 L151.8 157.2 L151.1 157.2 L150.4 156.7 L149.7 156.6 L149.0 156.9 L148.3 156.5 L147.6 156.1 M132.9 149.0 L132.2 148.4 L131.5 147.5 L130.8 148.1 L130.2 147.5 L129.5 146.8 L128.8 146.1 L128.1 145.8 L127.4 145.3 L126.7 145.8 L126.1 145.3 L125.4 144.8 L124.7 144.4 L124.0 143.4 L123.4 142.6 L122.7 142.7 L122.0 143.3 L121.3 142.5 L120.7 141.4 L120.0 140.8 L119.3 140.9 L118.6 140.9 L118.0 140.6 L117.3 139.9 L116.6 139.3 L116.0 139.8 L115.3 139.7 L114.6 139.7 L114.0 139.3 L113.3 137.9 L112.6 138.0 L112.0 137.2 L111.3 138.3 L110.7 137.6 L110.0 136.7 L109.3 136.6 L108.7 137.3 L108.0 136.7 L107.4 136.2 L106.7 136.1 L106.0 136.3 L105.4 136.6 L104.7 135.4 L104.1 136.0 L103.4 135.5 L102.8 135.7 L102.1 136.4 L101.5 136.4 L100.8 136.8 L100.2 136.8 L99.5 136.9 L98.9 137.3 L98.2 147.5 M194.2 189.4 L193.4 178.0 L192.6 177.8 L191.9 176.8 L191.1 174.8 L190.4 174.3 L189.6 173.6 L188.9 173.1 L188.1 172.1 L187.4 171.9 L186.6 170.3 L185.9 169.8 L185.1 169.9 L184.4 169.7 L183.6 167.8 L182.9 168.1 L182.1 167.1 L181.4 166.3 L180.7 166.0 L179.9 165.4 L179.2 165.6 L178.4 164.6 L177.7 164.7 L177.0 164.6 L176.2 163.8 L175.5 163.6 L174.8 162.5 L174.0 162.0 L173.3 162.7 L172.6 162.3 L171.8 161.7 L171.1 161.3 L170.4 160.3 L169.7 160.0 L168.9 159.7 L168.2 159.7 L167.5 159.5 L166.8 159.8 L166.0 159.4 L165.3 159.6 L164.6 158.1 M126.3 140.0 L125.7 139.9 L125.0 139.1 L124.3 138.7 L123.6 137.7 L123.0 138.4 L122.3 137.7 L121.6 136.3 L121.0 136.0 L120.3 135.9 L119.6 135.6 L119.0 135.7 L118.3 134.4 L117.7 134.2 L117.0 134.3 L116.3 134.6 L115.7 134.2 L115.0 133.7 L114.4 133.6 L113.7 133.7 L113.0 133.0 L112.4 132.6 L111.7 132.6 L111.1 132.2 L110.4 132.1 L109.8 131.8 L109.1 131.3 L108.5 131.4 L107.8 131.8 L107.2 130.9 L106.5 131.2 L105.9 131.2 L105.2 130.8 L104.6 130.7 L103.9 130.6 L103.3 130.8 L102.7 131.2 L102.0 131.4 L101.4 132.4 L100.7 132.4 L100.1 143.0 M201.1 184.7 L200.4 175.8 L199.6 174.3 L198.9 174.0 L198.1 172.1 L197.3 171.1 L196.6 170.3 L195.8 170.6 L195.1 169.2 L194.3 168.3 L193.6 168.8 L192.8 167.9 L192.1 167.2 L191.3 166.3 L190.6 166.2 L189.9 165.2 L189.1 165.0 L188.4 164.1 L187.6 163.8 L186.9 163.2 L186.1 163.4 L185.4 162.2 L184.7 161.8 L183.9 161.3 L183.2 161.9 L182.5 160.2 L181.7 160.5 L181.0 160.6 L180.3 160.1 L179.5 159.7 L178.8 159.4 L178.1 159.5 L177.3 159.2 L176.6 158.8 L175.9 157.9 L175.2 158.2 M158.7 157.2 L158.0 156.6 L157.3 156.9 L156.6 157.2 L155.9 155.7 L155.2 156.6 L154.5 156.1 L153.8 156.3 L153.1 156.5 L152.4 155.1 L151.7 154.8 L151.0 155.6 L150.3 154.9 L149.6 154.7 L149.0 154.6 L148.3 153.5 L147.6 152.9 L146.9 152.4 L146.2 152.1 L145.5 152.5 L144.8 151.6 L144.1 150.6 L143.4 149.7 L142.8 149.5 L142.1 148.8 L141.4 147.5 M125.9 134.7 L125.2 133.9 L124.6 133.4 L123.9 132.0 L123.3 132.7 L122.6 132.6 L121.9 131.7 L121.3 130.9 L120.6 131.3 L120.0 129.8 L119.3 130.4 L118.7 129.3 L118.0 129.9 L117.4 128.6 L116.7 129.3 L116.0 128.3 L115.4 127.9 L114.7 128.6 L114.1 128.6 L113.4 127.6 L112.8 127.5 L112.2 127.3 L111.5 126.7 L110.9 127.1 L110.2 127.0 L109.6 127.0 L108.9 127.0 L108.3 127.0 L107.6 127.4 L107.0 127.1 L106.4 127.2 L105.7 127.5 L105.1 126.9 L104.4 128.2 L103.8 128.4 L103.2 136.3 M208.0 184.6 L207.3 173.3 L206.5 172.1 L205.7 170.9 L205.0 169.7 L204.2 168.3 L203.5 167.8 L202.7 167.8 L202.0 167.1 L201.2 166.5 L200.5 166.1 L199.7 164.4 L199.0 165.0 L198.2 164.2 L197.5 163.0 L196.7 162.7 L196.0 162.7 L195.3 161.3 L194.5 161.6 L193.8 160.9 L193.0 161.2 L192.3 159.6 L191.6 160.3 L190.8 159.4 L190.1 158.3 L189.3 158.0 L188.6 157.8 L187.9 157.6 L187.1 158.2 L186.4 158.2 L185.7 157.3 L185.0 157.6 L184.2 156.1 L183.5 157.3 M171.3 157.2 L170.6 157.8 L169.8 158.4 L169.1 158.0 L168.4 159.0 L167.7 158.2 L167.0 159.0 L166.3 159.9 L165.6 159.6 L164.9 160.2 M144.9 151.1 L144.2 149.2 L143.5 148.0 L142.8 147.4 L142.1 146.6 L141.5 144.7 L140.8 143.6 L140.1 143.5 L139.4 142.9 L138.8 140.7 M127.5 129.2 L126.8 129.3 L126.2 128.4 L125.5 128.4 L124.9 127.1 L124.2 127.5 L123.5 127.4 L122.9 127.2 L122.2 126.3 L121.6 125.0 L120.9 125.8 L120.3 125.2 L119.6 124.2 L119.0 125.4 L118.3 124.8 L117.7 123.8 L117.1 124.6 L116.4 123.2 L115.8 123.1 L115.1 123.9 L114.5 123.0 L113.8 123.0 L113.2 122.8 L112.6 123.4 L111.9 123.2 L111.3 123.4 L110.6 123.3 L110.0 123.5 L109.4 122.5 L108.7 122.8 L108.1 123.8 L107.5 123.6 L106.8 124.3 L106.2 135.3 M214.1 181.8 L213.3 169.7 L212.6 169.4 L211.8 168.1 L211.0 166.6 L210.3 166.6 L209.5 165.1 L208.8 165.5 L208.0 163.9 L207.3 163.1 L206.5 162.4 L205.8 161.6 L205.0 161.3 L204.3 160.3 L203.6 160.9 L202.8 160.1 L202.1 160.1 L201.3 159.8 L200.6 158.8 L199.8 158.0 L199.1 157.4 L198.4 158.1 L197.6 156.3 L196.9 157.0 L196.2 156.6 L195.4 155.6 L194.7 155.2 L194.0 155.2 L193.2 155.5 L192.5 155.1 L191.8 154.2 L191.0 154.7 M179.5 155.3 L178.8 155.9 L178.1 156.9 L177.4 156.8 L176.6 158.3 L175.9 158.5 L175.2 159.4 M144.2 145.0 L143.5 143.3 L142.9 141.8 L142.2 140.5 L141.5 139.9 L140.9 137.4 L140.2 136.2 M129.7 125.7 L129.0 124.0 L128.4 124.2 L127.7 124.4 L127.1 122.9 L126.4 123.1 L125.8 122.3 L125.1 121.7 L124.5 121.8 L123.8 122.2 L123.2 120.8 L122.5 120.8 L121.9 120.3 L121.2 121.0 L120.6 120.0 L120.0 119.7 L119.3 120.2 L118.7 119.9 L118.0 119.8 L117.4 120.3 L116.8 119.9 L116.1 119.8 L115.5 120.1 L114.9 119.1 L114.2 119.6 L113.6 119.4 L113.0 119.9 L112.3 120.1 L111.7 119.8 L111.1 120.5 L110.4 120.9 L109.8 131.6 M219.3 178.4 L218.5 166.5 L217.8 166.4 L217.0 165.0 L216.3 163.8 L215.5 163.8 L214.8 161.8 L214.0 161.8 L213.3 161.5 L212.5 160.1 L211.8 159.3 L211.0 158.9 L210.3 157.9 L209.5 158.5 L208.8 157.5 L208.1 156.7 L207.3 156.0 L206.6 155.9 L205.8 155.6 L205.1 155.4 L204.4 154.7 L203.6 154.3 L202.9 153.3 L202.2 153.2 L201.4 153.0 L200.7 152.5 L200.0 153.5 L199.2 152.2 L198.5 152.4 L197.8 151.7 L197.0 152.2 L196.3 151.8 M186.2 152.9 L185.5 154.7 L184.8 154.9 L184.1 155.4 L183.4 155.7 L182.7 157.5 M146.3 139.4 L145.6 138.7 L144.9 137.0 L144.3 135.3 L143.6 133.9 L142.9 132.3 M133.8 121.5 L133.1 121.9 L132.5 120.7 L131.8 120.5 L131.2 120.5 L130.5 119.5 L129.9 118.9 L129.2 119.1 L128.6 118.1 L127.9 118.9 L127.3 118.6 L126.7 117.5 L126.0 118.0 L125.4 117.3 L124.7 117.3 L124.1 117.6 L123.5 116.5 L122.8 116.3 L122.2 117.0 L121.5 116.7 L120.9 115.9 L120.3 115.7 L119.6 115.8 L119.0 116.3 L118.4 116.5 L117.7 116.4 L117.1 116.9 L116.5 116.7 L115.9 117.4 L115.2 117.8 L114.6 117.9 L114.0 129.1 M223.7 168.7 L222.9 163.2 L222.2 162.2 L221.4 160.7 L220.7 159.9 L219.9 159.4 L219.2 158.4 L218.4 158.4 L217.7 157.2 L216.9 157.3 L216.2 156.3 L215.5 155.0 L214.7 154.9 L214.0 154.6 L213.2 153.7 L212.5 154.0 L211.8 152.8 L211.0 153.5 L210.3 152.7 L209.5 152.4 L208.8 151.8 L208.1 150.4 L207.3 151.4 L206.6 150.7 L205.9 150.1 L205.2 149.6 L204.4 149.3 L203.7 149.6 L203.0 149.6 L202.2 148.4 L201.5 149.3 M191.5 151.1 L190.7 151.5 L190.0 151.7 L189.3 151.9 L188.6 153.1 L187.9 154.3 M150.2 136.6 L149.6 134.8 L148.9 133.3 L148.2 132.3 L147.6 131.4 L146.9 129.9 M137.8 118.3 L137.1 118.1 L136.5 117.5 L135.8 118.2 L135.2 116.5 L134.6 116.9 L133.9 115.7 L133.3 115.8 L132.6 115.5 L132.0 114.8 L131.3 114.8 L130.7 114.6 L130.1 115.1 L129.4 114.3 L128.8 114.4 L128.2 114.6 L127.5 114.3 L126.9 113.6 L126.3 113.8 L125.6 113.0 L125.0 114.0 L124.4 114.1 L123.7 112.7 L123.1 113.7 L122.5 113.4 L121.8 113.9 L121.2 114.1 L120.6 114.1 L119.9 113.9 L119.3 115.4 L118.7 118.7 M228.0 171.0 L227.3 160.3 L226.5 159.5 L225.8 158.8 L225.0 157.9 L224.3 156.8 L223.5 155.3 L222.8 155.8 L222.0 154.0 L221.3 153.6 L220.6 153.9 L219.8 153.2 L219.1 151.5 L218.3 151.1 L217.6 151.2 L216.9 149.9 L216.1 150.4 L215.4 149.7 L214.7 149.7 L213.9 148.5 L213.2 148.9 L212.5 148.3 L211.7 147.0 L211.0 147.1 L210.3 146.7 L209.6 146.3 L208.8 146.2 L208.1 146.6 L207.4 145.6 L206.7 146.2 L205.9 145.8 L205.2 145.4 M195.2 147.6 L194.5 148.3 L193.8 148.1 L193.1 148.7 L192.4 150.2 L191.7 151.0 M155.5 134.4 L154.8 132.4 L154.2 130.8 L153.5 128.9 L152.8 129.0 L152.2 126.4 M143.0 115.6 L142.4 116.0 L141.8 115.1 L141.1 114.6 L140.5 114.4 L139.8 114.6 L139.2 113.7 L138.5 112.9 L137.9 113.7 L137.3 112.7 L136.6 113.2 L136.0 111.8 L135.3 111.7 L134.7 112.6 L134.1 111.3 L133.4 111.2 L132.8 111.8 L132.2 111.0 L131.5 110.6 L130.9 111.0 L130.3 110.8 L129.6 110.1 L129.0 110.6 L128.4 110.8 L127.7 111.5 L127.1 111.4 L126.5 110.4 L125.9 110.8 L125.2 111.0 L124.6 111.7 L124.0 112.1 L123.4 122.9 M231.5 167.7 L230.8 157.2 L230.0 155.8 L229.3 154.9 L228.5 153.7 L227.8 153.4 L227.1 152.9 L226.3 152.2 L225.6 151.4 L224.8 149.8 L224.1 149.4 L223.4 148.7 L222.6 148.5 L221.9 148.4 L221.2 147.4 L220.4 146.4 L219.7 146.5 L219.0 145.9 L218.2 145.8 L217.5 145.7 L216.8 144.6 L216.1 144.4 L215.3 144.2 L214.6 143.9 L213.9 143.0 L213.2 143.3 L212.4 142.7 L211.7 142.9 L211.0 142.0 L210.3 142.3 L209.6 141.9 L208.8 141.0 M197.5 142.9 L196.8 143.4 L196.1 144.5 L195.3 144.4 L194.6 145.8 L193.9 145.7 L193.2 146.6 M162.6 132.8 L162.0 131.2 L161.3 130.2 L160.6 128.5 L160.0 128.2 L159.3 125.8 L158.7 124.9 M148.2 114.2 L147.6 113.6 L147.0 112.8 L146.3 112.1 L145.7 112.6 L145.0 111.0 L144.4 111.6 L143.7 110.2 L143.1 110.2 L142.5 110.3 L141.8 110.3 L141.2 110.5 L140.6 110.3 L139.9 109.3 L139.3 108.9 L138.6 108.5 L138.0 109.1 L137.4 108.0 L136.7 108.8 L136.1 107.8 L135.5 107.9 L134.9 109.0 L134.2 108.0 L133.6 108.2 L133.0 108.2 L132.3 108.0 L131.7 108.6 L131.1 108.9 L130.5 109.4 L129.8 109.0 L129.2 109.5 L128.6 121.1 M234.2 163.8 L233.5 153.2 L232.8 152.3 L232.0 151.4 L231.3 149.9 L230.5 149.4 L229.8 148.7 L229.1 148.3 L228.3 147.4 L227.6 146.1 L226.9 146.6 L226.1 145.3 L225.4 144.5 L224.7 144.7 L224.0 143.9 L223.2 142.5 L222.5 142.0 L221.8 141.8 L221.0 142.4 L220.3 141.1 L219.6 141.1 L218.9 141.1 L218.2 140.2 L217.4 139.2 L216.7 138.9 L216.0 139.4 L215.3 139.6 L214.6 138.1 L213.8 137.8 L213.1 138.2 L212.4 138.4 L211.7 137.7 L211.0 137.2 L210.3 137.4 M198.3 138.5 L197.6 139.0 L196.9 139.3 L196.2 140.0 L195.5 140.1 L194.8 139.5 L194.1 141.4 L193.4 140.8 L192.7 141.1 L192.0 142.2 M172.4 133.0 L171.7 132.4 L171.0 130.7 L170.4 129.5 L169.7 128.4 L169.1 127.6 L168.4 125.9 L167.7 125.1 L167.1 124.6 L166.4 123.4 M155.3 112.6 L154.7 111.1 L154.0 111.2 L153.4 110.4 L152.7 110.9 L152.1 109.5 L151.4 110.5 L150.8 109.5 L150.2 109.7 L149.5 109.2 L148.9 108.1 L148.2 108.9 L147.6 108.2 L147.0 108.3 L146.3 107.1 L145.7 108.0 L145.1 107.5 L144.4 106.5 L143.8 106.5 L143.2 106.3 L142.5 105.7 L141.9 107.1 L141.3 106.2 L140.6 106.1 L140.0 106.1 L139.4 106.1 L138.7 107.1 L138.1 107.1 L137.5 106.1 L136.9 106.7 L136.2 107.5 L135.6 108.1 L135.0 107.8 L134.4 119.1 M236.2 157.3 L235.4 148.8 L234.7 147.1 L234.0 147.3 L233.2 145.8 L232.5 145.5 L231.8 143.8 L231.1 143.5 L230.3 143.4 L229.6 141.7 L228.9 141.5 L228.1 141.4 L227.4 140.1 L226.7 140.2 L226.0 138.8 L225.2 139.4 L224.5 138.0 L223.8 138.9 L223.1 137.5 L222.4 137.8 L221.6 137.1 L220.9 136.4 L220.2 136.9 L219.5 136.2 L218.8 136.0 L218.1 134.7 L217.3 135.3 L216.6 134.6 L215.9 134.6 L215.2 134.5 L214.5 133.2 L213.8 133.6 L213.1 133.1 L212.4 132.8 L211.7 132.4 L211.0 133.0 M195.0 132.5 L194.3 132.0 L193.6 132.4 L192.9 132.7 L192.2 131.3 L191.6 131.7 L190.9 131.9 L190.2 132.2 L189.5 131.1 L188.8 131.3 L188.2 131.6 L187.5 130.2 L186.8 130.0 L186.1 129.7 L185.4 129.5 L184.8 129.6 L184.1 129.5 L183.4 128.6 L182.8 128.8 L182.1 127.6 L181.4 127.9 L180.7 127.4 L180.1 125.8 L179.4 125.8 L178.7 124.6 L178.1 123.8 M163.0 110.4 L162.3 110.3 L161.7 109.6 L161.0 109.5 L160.4 108.8 L159.7 108.5 L159.1 109.4 L158.4 108.7 L157.8 108.1 L157.2 107.9 L156.5 107.7 L155.9 106.4 L155.2 107.4 L154.6 107.0 L154.0 105.9 L153.3 106.5 L152.7 106.2 L152.0 105.0 L151.4 105.1 L150.8 105.3 L150.1 105.6 L149.5 105.2 L148.9 104.0 L148.2 104.3 L147.6 105.3 L147.0 104.4 L146.3 104.9 L145.7 104.4 L145.1 105.0 L144.5 105.2 L143.8 105.5 L143.2 105.3 L142.6 104.7 L142.0 105.0 L141.3 105.7 L140.7 114.0 M238.1 156.3 L237.3 145.5 L236.6 143.3 L235.9 142.3 L235.2 142.3 L234.4 140.9 L233.7 139.9 L233.0 139.1 L232.3 139.5 L231.5 138.4 L230.8 138.2 L230.1 137.6 L229.4 137.0 L228.7 136.7 L227.9 136.5 L227.2 134.8 L226.5 134.5 L225.8 133.9 L225.1 134.5 L224.4 134.0 L223.6 133.1 L222.9 132.2 L222.2 132.5 L221.5 132.5 L220.8 131.5 L220.1 130.6 L219.4 130.3 L218.7 129.9 L218.0 130.3 L217.3 130.3 L216.6 129.1 L215.9 129.0 L215.2 128.7 L214.5 129.1 L213.8 129.0 L213.1 128.8 L212.4 127.6 L211.7 127.3 L211.0 127.8 L210.3 126.8 L209.6 127.4 M172.5 110.6 L171.8 110.1 L171.2 110.2 L170.5 109.8 L169.9 109.4 L169.2 109.1 L168.6 108.4 L168.0 108.6 L167.3 107.3 L166.7 107.8 L166.0 107.1 L165.4 106.4 L164.7 106.8 L164.1 106.1 L163.4 105.7 L162.8 105.5 L162.2 104.7 L161.5 104.7 L160.9 105.4 L160.2 104.2 L159.6 104.4 L159.0 104.0 L158.3 104.5 L157.7 103.9 L157.1 103.3 L156.4 103.0 L155.8 102.9 L155.2 103.8 L154.5 102.8 L153.9 103.2 L153.3 103.0 L152.6 102.7 L152.0 103.4 L151.4 102.6 L150.7 102.7 L150.1 103.0 L149.5 103.9 L148.9 103.9 L148.2 104.7 L147.6 104.6 L147.0 114.4 M238.5 151.7 L237.8 140.2 L237.1 138.9 L236.3 139.1 L235.6 137.0 L234.9 136.8 L234.2 136.3 L233.5 136.0 L232.7 134.3 L232.0 134.4 L231.3 133.6 L230.6 133.5 L229.9 132.4 L229.2 132.1 L228.5 131.0 L227.7 130.7 L227.0 130.0 L226.3 130.3 L225.6 130.2 L224.9 128.6 L224.2 128.1 L223.5 128.2 L222.8 127.4 L222.1 127.4 L221.4 127.1 L220.7 127.0 L220.0 126.7 L219.3 126.2 L218.6 126.2 L217.9 125.5 L217.2 125.0 L216.5 125.4 L215.8 124.6 L215.1 124.5 L214.4 123.7 L213.7 123.2 L213.0 123.2 L212.3 122.9 L211.6 122.7 L210.9 123.0 L210.3 122.5 L209.6 121.6 L208.9 121.2 L208.2 122.0 L207.5 122.0 L206.8 120.3 L206.1 120.2 L205.4 120.3 L204.8 119.7 L204.1 119.8 L203.4 119.1 L202.7 119.8 L202.0 119.3 M187.9 112.7 L187.3 113.0 L186.6 111.9 L186.0 112.2 L185.3 111.2 L184.6 110.7 L184.0 111.0 L183.3 109.8 L182.7 110.0 L182.0 109.5 L181.3 110.3 L180.7 109.8 L180.0 108.6 L179.4 107.9 L178.7 108.0 L178.1 107.3 L177.4 108.2 L176.8 106.7 L176.1 106.3 L175.5 106.4 L174.8 106.3 L174.2 105.6 L173.5 106.0 L172.9 105.2 L172.2 104.9 L171.6 104.9 L170.9 105.1 L170.3 105.2 L169.7 104.7 L169.0 103.6 L168.4 104.3 L167.7 104.2 L167.1 103.8 L166.5 103.1 L165.8 102.8 L165.2 102.2 L164.5 102.0 L163.9 101.8 L163.3 101.9 L162.6 102.5 L162.0 102.9 L161.4 101.6 L160.7 102.6 L160.1 102.0 L159.5 102.5 L158.8 101.6 L158.2 102.6 L157.6 102.5 L157.0 103.0 L156.3 102.3 L155.7 102.8 L155.1 103.5 L154.5 114.1 M238.2 146.8 L237.5 136.3 L236.8 134.2 L236.0 133.4 L235.3 132.2 L234.6 132.1 L233.9 132.0 L233.2 130.6 L232.5 130.5 L231.8 129.6 L231.1 129.2 L230.4 128.5 L229.7 127.4 L229.0 127.1 L228.3 127.2 L227.6 126.1 L226.9 125.5 L226.2 125.2 L225.5 125.0 L224.8 124.0 L224.1 124.2 L223.4 124.4 L222.7 123.8 L222.0 122.9 L221.3 123.0 L220.6 122.5 L219.9 122.2 L219.2 122.2 L218.5 122.0 L217.8 121.7 L217.1 120.4 L216.4 120.6 L215.7 120.0 L215.0 119.0 L214.4 119.1 L213.7 118.5 L213.0 118.2 L212.3 117.6 L211.6 118.6 L210.9 117.8 L210.3 116.6 L209.6 117.0 L208.9 116.0 L208.2 116.9 L207.5 116.8 L206.8 115.3 L206.2 115.7 L205.5 115.3 L204.8 114.4 L204.1 115.2 L203.5 113.8 L202.8 114.3 L202.1 114.3 L201.4 114.0 L200.8 113.3 L200.1 113.1 L199.4 112.1 L198.8 113.1 L198.1 112.8 L197.4 112.3 L196.8 111.4 L196.1 110.8 L195.4 111.0 L194.8 110.5 L194.1 110.1 L193.4 110.7 L192.8 110.1 L192.1 108.7 L191.5 109.3 L190.8 108.1 L190.1 108.5 L189.5 108.6 L188.8 108.6 L188.2 108.0 L187.5 107.5 L186.9 107.1 L186.2 106.8 L185.5 106.4 L184.9 106.3 L184.2 106.7 L183.6 106.1 L182.9 104.8 L182.3 106.0 L181.6 104.7 L181.0 104.8 L180.3 104.2 L179.7 104.5 L179.0 104.3 L178.4 103.8 L177.8 103.0 L177.1 103.6 L176.5 103.7 L175.8 103.6 L175.2 102.1 L174.5 102.7 L173.9 102.9 L173.3 102.1 L172.6 101.6 L172.0 101.9 L171.3 102.5 L170.7 102.0 L170.1 102.1 L169.4 102.4 L168.8 100.9 L168.2 101.6 L167.5 102.0 L166.9 101.0 L166.3 101.0 L165.6 101.3 L165.0 102.3 L164.4 102.6 L163.7 102.4 L163.1 103.9 L162.5 112.4 M236.5 140.2 L235.8 134.4 L235.1 129.6 L234.4 128.4 L233.7 128.4 L233.0 127.2 L232.3 127.2 L231.6 126.5 L230.9 125.8 L230.2 124.9 L229.5 124.4 L228.8 123.3 L228.1 123.8 L227.4 123.3 L226.7 122.0 L226.0 121.5 L225.3 121.0 L224.6 120.6 L223.9 120.2 L223.2 119.9 L222.5 119.2 L221.8 119.8 L221.1 119.1 L220.5 117.9 L219.8 118.4 L219.1 117.5 L218.4 117.5 L217.7 116.9 L217.0 116.0 L216.4 115.9 L215.7 115.9 L215.0 115.8 L214.3 114.7 L213.6 114.6 L213.0 114.6 L212.3 113.7 L211.6 113.6 L210.9 112.9 L210.2 113.0 L209.6 112.4 L208.9 112.6 L208.2 112.0 L207.6 111.5 L206.9 112.3 L206.2 111.5 L205.5 111.0 L204.9 111.5 L204.2 110.1 L203.5 109.9 L202.9 109.3 L202.2 109.9 L201.5 109.4 L200.9 108.5 L200.2 108.9 L199.5 108.0 L198.9 108.4 L198.2 108.2 L197.6 108.0 L196.9 107.9 L196.2 107.3 L195.6 107.4 L194.9 106.1 L194.3 105.7 L193.6 106.7 L193.0 106.5 L192.3 106.3 L191.6 104.7 L191.0 105.7 L190.3 104.5 L189.7 104.8 L189.0 104.7 L188.4 104.4 L187.7 103.5 L187.1 104.3 L186.4 102.9 L185.8 103.2 L185.1 103.5 L184.5 103.4 L183.9 102.6 L183.2 102.5 L182.6 102.8 L181.9 102.6 L181.3 102.3 L180.6 101.5 L180.0 102.0 L179.4 101.4 L178.7 101.6 L178.1 101.6 L177.4 101.6 L176.8 101.4 L176.2 101.7 L175.5 101.4 L174.9 102.3 L174.3 102.2 L173.6 101.5 L173.0 102.4 L172.4 106.8 L171.7 112.0 M232.7 134.6 L232.0 135.0 L231.3 123.4 L230.6 122.6 L229.9 122.4 L229.3 121.0 L228.6 121.0 L227.9 121.1 L227.2 120.5 L226.5 119.7 L225.8 118.6 L225.1 117.8 L224.4 118.4 L223.8 118.0 L223.1 116.7 L222.4 116.6 L221.7 116.2 L221.0 115.2 L220.4 114.7 L219.7 114.2 L219.0 114.2 L218.3 114.9 L217.6 114.3 L217.0 113.3 L216.3 112.4 L215.6 113.4 L214.9 112.4 L214.3 112.2 L213.6 111.9 L212.9 111.7 L212.3 111.4 L211.6 111.1 L210.9 111.0 L210.2 110.0 L209.6 109.9 L208.9 109.2 L208.2 109.0 L207.6 108.3 L206.9 108.9 L206.2 107.8 L205.6 108.2 L204.9 107.6 L204.3 107.1 L203.6 107.4 L202.9 107.1 L202.3 106.6 L201.6 107.1 L201.0 106.2 L200.3 106.6 L199.6 106.2 L199.0 105.4 L198.3 104.6 L197.7 104.4 L197.0 105.3 L196.4 105.2 L195.7 104.5 L195.1 104.4 L194.4 104.3 L193.8 103.5 L193.1 103.4 L192.5 103.4 L191.8 103.2 L191.2 103.1 L190.5 102.8 L189.9 102.4 L189.2 102.3 L188.6 102.2 L188.0 102.4 L187.3 103.4 L186.7 102.9 L186.0 102.4 L185.4 103.1 L184.7 102.8 L184.1 104.0 L183.5 113.8 L182.8 113.3 M222.9 126.7 L222.3 125.9 L221.6 120.7 L220.9 114.5 L220.2 114.8 L219.6 114.3 L218.9 112.9 L218.2 112.9 L217.6 113.2 L216.9 112.6 L216.2 111.6 L215.6 111.9 L214.9 111.5 L214.2 110.6 L213.6 110.5 L212.9 110.5 L212.2 109.8 L211.6 109.4 L210.9 109.9 L210.2 109.3 L209.6 109.0 L208.9 107.9 L208.3 108.9 L207.6 108.2 L206.9 108.2 L206.3 107.3 L205.6 106.9 L205.0 107.8 L204.3 106.4 L203.7 106.5 L203.0 107.5 L202.4 106.3 L201.7 107.1 L201.1 111.1 L200.4 117.0 L199.8 116.2" fill="none" stroke="#e6e6e6" stroke-width="0.95"/>
</svg><svg class="a" style="left:-472px;top:-65px" width="800" height="466" viewBox="0 0 800 466">
<defs><linearGradient id="cone" x1="0" y1="0" x2="0" y2="1"><stop offset="0" stop-color="#b8b8b8"/><stop offset="0.35" stop-color="#d0d0d0"/><stop offset="0.5" stop-color="#f4f4f4"/><stop offset="1" stop-color="#ffffff"/></linearGradient></defs>
<path d="M767.6 204.9 L770.2 187.3 L640 133" fill="none" stroke="#5ec8c8" stroke-width="1" stroke-dasharray="1 2"/>
<g fill="none" stroke="#e6e6e6" stroke-width="1">
<path d="M624.6 283.5 V294.5 Q624.6 297.6 628 297.6 L631 298.5"/>
<path d="M631 288.3 V299 Q631 302 634.5 302 L638.3 303"/>
<path d="M638.3 291.5 V302.5 Q638.3 306 642 306 L645.6 307"/>
<path d="M645.6 295.5 V306.5 Q645.6 310.2 649.7 310.2 L767.6 204.9"/>
</g>
<g fill="none" stroke="#d86c6c" stroke-width="1">
<path d="M440 210 L629.25 329.25"/>
<path d="M624.75 334.5 L633.5 326.5"/>
<path d="M666.75 327.75 L785 212"/>
<path d="M661.5 325.5 L671.5 331.5"/>
<path d="M780.5 209.5 L791 215"/>
<path d="M796 218.5 L799 219.5"/>
</g>
<g fill="none" stroke="#d86c6c" stroke-width="1.1" stroke-linecap="round">
<!-- labels moved -->
<!-- bottom labels -->
<ellipse cx="618.5" cy="339.6" rx="5.5" ry="3.2" />
<path d="M608 345 Q610 342 614 342.5"/>
<path d="M624.5 341 L627.5 340.5 L627.5 345"/>
<ellipse cx="635.3" cy="337.5" rx="2.4" ry="4.6" transform="rotate(25 635.3 337.5)"/>
<path d="M636 333.5 L636.3 333.7"/>
<path d="M654 320 L640 328.5 L640 331 L647.5 326.5 L647.5 322.5 M649.5 325 V343 M649.5 340.5 L653.5 339.5"/>
<path d="M640 338 Q642 335.5 645 336.5 Q647.5 338.5 645 341 L640.5 343.5 L647 343.5"/>
<path d="M677 335.5 L681 338"/>
<path d="M685.5 339.5 Q689 335 692 337.5 Q693 341 689 343.5 Q685 344 685.5 339.5 Z"/>
</g>
<text x="0" y="0" font-family="Liberation Sans" font-size="10.5" fill="#d86c6c" transform="translate(528,277.5) rotate(33) skewX(-20)">2.34</text>
<text x="0" y="0" font-family="Liberation Sans" font-size="10.5" fill="#d86c6c" transform="translate(736.5,274.5) rotate(-42) skewX(25)">2.46</text>
<!-- axes -->
<path d="M654 289 L580.5 248" stroke="#ff2828" stroke-width="1.1" fill="none"/>
<path d="M550 237.5 L559 234.5 L568 240 M559 234.5 L560 228.5" stroke="#ff2828" stroke-width="1.1" fill="none"/>
<path d="M654 289 L712 238.5" stroke="#22cc22" stroke-width="0.9" fill="none"/>
<path d="M716 231 L729 229 M720 223.5 L724 236.5" stroke="#22cc22" stroke-width="0.9" fill="none"/>
<path d="M654.5 289 L656 190" stroke="#3434ff" stroke-width="1.2" fill="none"/>
<path d="M653 164.5 L662.5 160.5 L654.5 184.5 L663 181.5" stroke="#3434ff" stroke-width="1.1" fill="none"/>
<circle cx="654" cy="289.5" r="1.6" fill="#ff9090"/>
<!-- cone -->
<path d="M645.8 190.5 L656.3 210.5 L667.5 190.5 Z" fill="url(#cone)"/>
<ellipse cx="656.6" cy="190.3" rx="10.9" ry="5" fill="#a8a8a8"/>
<path d="M656 205 L655.5 212" stroke="#3434ff" stroke-width="1.1"/>
</svg>
<div class="t" style="left:19px;top:8px;font-family:'Liberation Mono',monospace;font-size:12px;color:#e8e8e8;line-height:12.3px;white-space:pre">X:   1.0174
Y:   0.7755
Z:   0.0000</div>
<div class="t" style="left:4.5px;top:44.9px;font-family:'Liberation Mono',monospace;font-size:12px;color:#e8e8e8;line-height:12.3px;white-space:pre">Vel:   0.0000</div>

</div>
<div class="a" style="left:472px;top:345px;width:325px;height:2px;background:#8c8e8a"></div>
<!-- text area -->
<div class="a" style="left:516px;top:347px;width:269px;height:99px;background:#fff"></div>
<div class="a" style="left:785px;top:347px;width:10px;height:98px;background:#d2d4cf"></div>
<svg class="a" style="left:785px;top:347px" width="11" height="99" viewBox="0 0 11 99">
<path d="M1 9.5 L5 1 L9.5 9.5" fill="none" stroke="#fff" stroke-width="1"/><path d="M5 1 L9.5 9.5 L1 9.5" fill="none" stroke="#6a6c68" stroke-width="1"/>
<path d="M1 14.5 H9.5" stroke="#6a6c68" stroke-width="1.2"/><path d="M1 13 H9.5" stroke="#fff" stroke-width="0.8"/>
<path d="M1 89 L5 97.5" fill="none" stroke="#fff" stroke-width="1"/><path d="M5 97.5 L9.5 89" fill="none" stroke="#6a6c68" stroke-width="1.1"/>
</svg>
<div class="a" style="left:797px;top:65px;width:1px;height:382px;background:#e8e8e8"></div>
<div class="a" style="left:798px;top:1px;width:2px;height:465px;background:#9a9c98"></div>
<!-- status bar -->
<div class="a" style="left:259px;top:446px;width:541px;height:1px;background:#b0b2ae"></div>
<div class="a" style="left:261px;top:447px;width:84px;height:17px;border-top:1px solid #8a8c88;border-left:1px solid #8a8c88;border-bottom:1px solid #fff;border-right:1px solid #fff"></div>
<div class="t" style="left:263px;top:451px">ESTOP</div>
<div class="a" style="left:345px;top:447px;width:176px;height:17px;border-top:1px solid #8a8c88;border-left:1px solid #8a8c88;border-bottom:1px solid #fff;border-right:1px solid #fff"></div>
<div class="t" style="left:348px;top:451px">No tool</div>
<div class="a" style="left:521px;top:447px;width:146px;height:17px;border-top:1px solid #8a8c88;border-left:1px solid #8a8c88;border-bottom:1px solid #fff;border-right:1px solid #fff"></div>
<div class="t" style="left:523px;top:451px">Position: Relative Actual</div>
<div class="a" style="left:667px;top:447px;width:130px;height:17px;border-top:1px solid #8a8c88;border-left:1px solid #8a8c88;border-bottom:1px solid #fff;border-right:1px solid #fff"></div>
<div class="t" style="left:670px;top:448px">Filtering...</div>
<div class="a" style="left:258px;top:465px;width:542px;height:1px;background:#333"></div>


<!-- ================= DIALOG ================= -->
<div class="a bg" style="left:1px;top:112px;width:516px;height:335px;border-left:1px solid #eef0ec;border-top:1px solid #eef0ec;border-right:1px solid #222;border-bottom:1px solid #4a4a4a;box-shadow:inset 0 -1px 0 #9a9c98"></div>
<svg class="a" style="left:1px;top:115px" width="14" height="11" viewBox="0 0 14 11"><path d="M1 1 L12.5 9.8" stroke="#f00" stroke-width="2.2"/><path d="M11.5 0.8 L1.5 10" stroke="#f00" stroke-width="1.3"/></svg>
<div class="t" style="left:20px;top:114.00px;font-size:11.8px;color:#111">torus.png: Image to gcode</div>
<div class="tb" style="left:491px;top:114px;width:11px;height:11px"></div>
<svg class="a" style="left:491px;top:114px" width="11" height="11"><path d="M3 8.5 H8" stroke="#777" stroke-width="1"/></svg>
<div class="tb" style="left:504px;top:114px;width:11px;height:11px"></div>
<svg class="a" style="left:504px;top:114px" width="11" height="11"><path d="M2.5 2.5 L8.5 8.5 M8.5 2.5 L2.5 8.5" stroke="#888" stroke-width="0.9"/></svg>
<div class="a" style="left:1px;top:126px;width:515px;height:2px;background:#a8aaa6"></div>
<svg class="a" style="left:2px;top:128px" width="245" height="244" viewBox="0 0 245 244">
<defs><radialGradient id="tor" cx="122.5" cy="122" r="82.6" gradientUnits="userSpaceOnUse">
<stop offset="0" stop-color="#000"/><stop offset="0.385" stop-color="#000"/>
<stop offset="0.393" stop-color="#383838"/><stop offset="0.43" stop-color="#606060"/><stop offset="0.48" stop-color="#888888"/>
<stop offset="0.55" stop-color="#a6a6a6"/><stop offset="0.64" stop-color="#bababa"/><stop offset="0.74" stop-color="#c3c3c3"/>
<stop offset="0.86" stop-color="#b6b6b6"/><stop offset="0.95" stop-color="#9e9e9e"/><stop offset="0.995" stop-color="#8c8c8c"/><stop offset="1" stop-color="#000"/>
</radialGradient></defs>
<rect width="245" height="244" fill="#000"/><circle cx="122.5" cy="122" r="82.6" fill="url(#tor)"/></svg>
<div class="t" style="left:60.3px;top:374.00px;font-size:10.2px;color:#1a1a1a">Image size: 400 &#215; 400 pixels</div>
<div class="t" style="left:60.3px;top:386.00px;font-size:10.2px;color:#1a1a1a">Minimum pixel value: 0</div>
<div class="t" style="left:60.3px;top:397.00px;font-size:10.2px;color:#1a1a1a">Maximum pixel value: 198</div>
<div class="t" style="left:250.3px;top:131.00px;font-size:10.2px;color:#1a1a1a">Units</div>
<div class="entry" style="top:128px"></div>
<div class="t" style="left:383.5px;top:131.00px;font-size:10.2px;color:#000">G20 (in)</div>
<div class="ddb" style="left:499px;top:129px;right:auto"></div>
<div class="t" style="left:250.3px;top:148.00px;font-size:10.2px;color:#1a1a1a">Invert Image</div>
<div class="chk" style="top:148px"></div>
<div class="t" style="left:397px;top:148.00px;font-size:10.2px;color:#1a1a1a">Yes</div>
<div class="t" style="left:250.3px;top:164.00px;font-size:10.2px;color:#1a1a1a">Normalize Image</div>
<div class="chk" style="top:164px"></div>
<div class="t" style="left:397px;top:164.00px;font-size:10.2px;color:#1a1a1a">Yes</div>
<div class="t" style="left:250.3px;top:181.00px;font-size:10.2px;color:#1a1a1a">Tolerance (units)</div>
<div class="entry" style="top:178px"></div>
<div class="t" style="left:383.5px;top:181.00px;font-size:10.2px;color:#000">0.001</div>
<div class="t" style="left:250.3px;top:199.00px;font-size:10.2px;color:#1a1a1a">Pixel Size</div>
<div class="entry" style="top:196px"></div>
<div class="t" style="left:383.5px;top:199.00px;font-size:10.2px;color:#000">0.006</div>
<div class="t" style="left:250.3px;top:217.00px;font-size:10.2px;color:#1a1a1a">Feed Rate (units per minute)</div>
<div class="entry" style="top:214px"></div>
<div class="t" style="left:383.5px;top:217.00px;font-size:10.2px;color:#000">12.0</div>
<div class="t" style="left:250.3px;top:235.00px;font-size:10.2px;color:#1a1a1a">Scan pattern</div>
<div class="entry" style="top:232px"></div>
<div class="t" style="left:383.5px;top:235.00px;font-size:10.2px;color:#000">Rows then Columns</div>
<div class="ddb" style="left:499px;top:233px;right:auto"></div>
<div class="t" style="left:250.3px;top:253.00px;font-size:10.2px;color:#1a1a1a">Scan direction</div>
<div class="entry" style="top:250px"></div>
<div class="t" style="left:383.5px;top:253.00px;font-size:10.2px;color:#000">Down Milling</div>
<div class="ddb" style="left:499px;top:251px;right:auto"></div>
<div class="t" style="left:250.3px;top:271.00px;font-size:10.2px;color:#1a1a1a">Depth (units)</div>
<div class="entry" style="top:268px"></div>
<div class="t" style="left:383.5px;top:271.00px;font-size:10.2px;color:#000">0.25</div>
<div class="t" style="left:250.3px;top:289.00px;font-size:10.2px;color:#1a1a1a">Y step (pixels)</div>
<div class="t" style="left:384.4px;top:289.00px;font-size:10.2px;color:#1a1a1a">15</div>
<div class="a" style="left:403px;top:287px;width:111px;height:15px;background:#bfc2bc;border-top:1px solid #8a8c88;border-left:1px solid #8a8c88;border-bottom:1px solid #fff;border-right:1px solid #fff"></div>
<div class="a" style="left:416px;top:288px;width:24px;height:13px;background:#d6d8d3;border-top:1px solid #fff;border-left:1px solid #fff;border-bottom:1px solid #8a8c88;border-right:1px solid #8a8c88"></div>
<div class="a" style="left:427px;top:289px;width:2px;height:11px;border-left:1px solid #8a8c88;border-right:1px solid #fff"></div>
<div class="t" style="left:250.3px;top:309.00px;font-size:10.2px;color:#1a1a1a">Tool Diameter (units)</div>
<div class="entry" style="top:306px"></div>
<div class="t" style="left:383.5px;top:309.00px;font-size:10.2px;color:#000">0.0625</div>
<div class="t" style="left:250.3px;top:327.00px;font-size:10.2px;color:#1a1a1a">Safety Height (units)</div>
<div class="entry" style="top:324px"></div>
<div class="t" style="left:383.5px;top:327.00px;font-size:10.2px;color:#000">0.012</div>
<div class="t" style="left:250.3px;top:345.00px;font-size:10.2px;color:#1a1a1a">Tool Type</div>
<div class="entry" style="top:342px"></div>
<div class="t" style="left:383.5px;top:345.00px;font-size:10.2px;color:#000">Ball End</div>
<div class="ddb" style="left:499px;top:343px;right:auto"></div>
<div class="t" style="left:250.3px;top:363.00px;font-size:10.2px;color:#1a1a1a">Lace bounding</div>
<div class="entry" style="top:360px"></div>
<div class="t" style="left:383.5px;top:363.00px;font-size:10.2px;color:#000">Secondary</div>
<div class="ddb" style="left:499px;top:361px;right:auto"></div>
<div class="t" style="left:250.3px;top:381.00px;font-size:10.2px;color:#1a1a1a">Contact angle</div>
<div class="entry" style="top:378px"></div>
<div class="t" style="left:383.5px;top:381.00px;font-size:10.2px;color:#000">45.0</div>
<div class="a" style="left:359px;top:414.5px;width:70px;height:26px;border:1px solid #8a8c88;border-right-color:#fff;border-bottom-color:#fff"></div>
<div class="a rais" style="left:360.5px;top:416.5px;width:67px;height:22px;border-width:2px"></div>
<div class="t" style="left:386.5px;top:422.00px;font-size:10.2px;color:#1a1a1a">OK</div>
<div class="a rais" style="left:443px;top:417px;width:65px;height:21.5px;border-width:2px"></div>
<div class="t" style="left:459.5px;top:422.00px;font-size:10.2px;color:#1a1a1a">Cancel</div>


</body></html>
